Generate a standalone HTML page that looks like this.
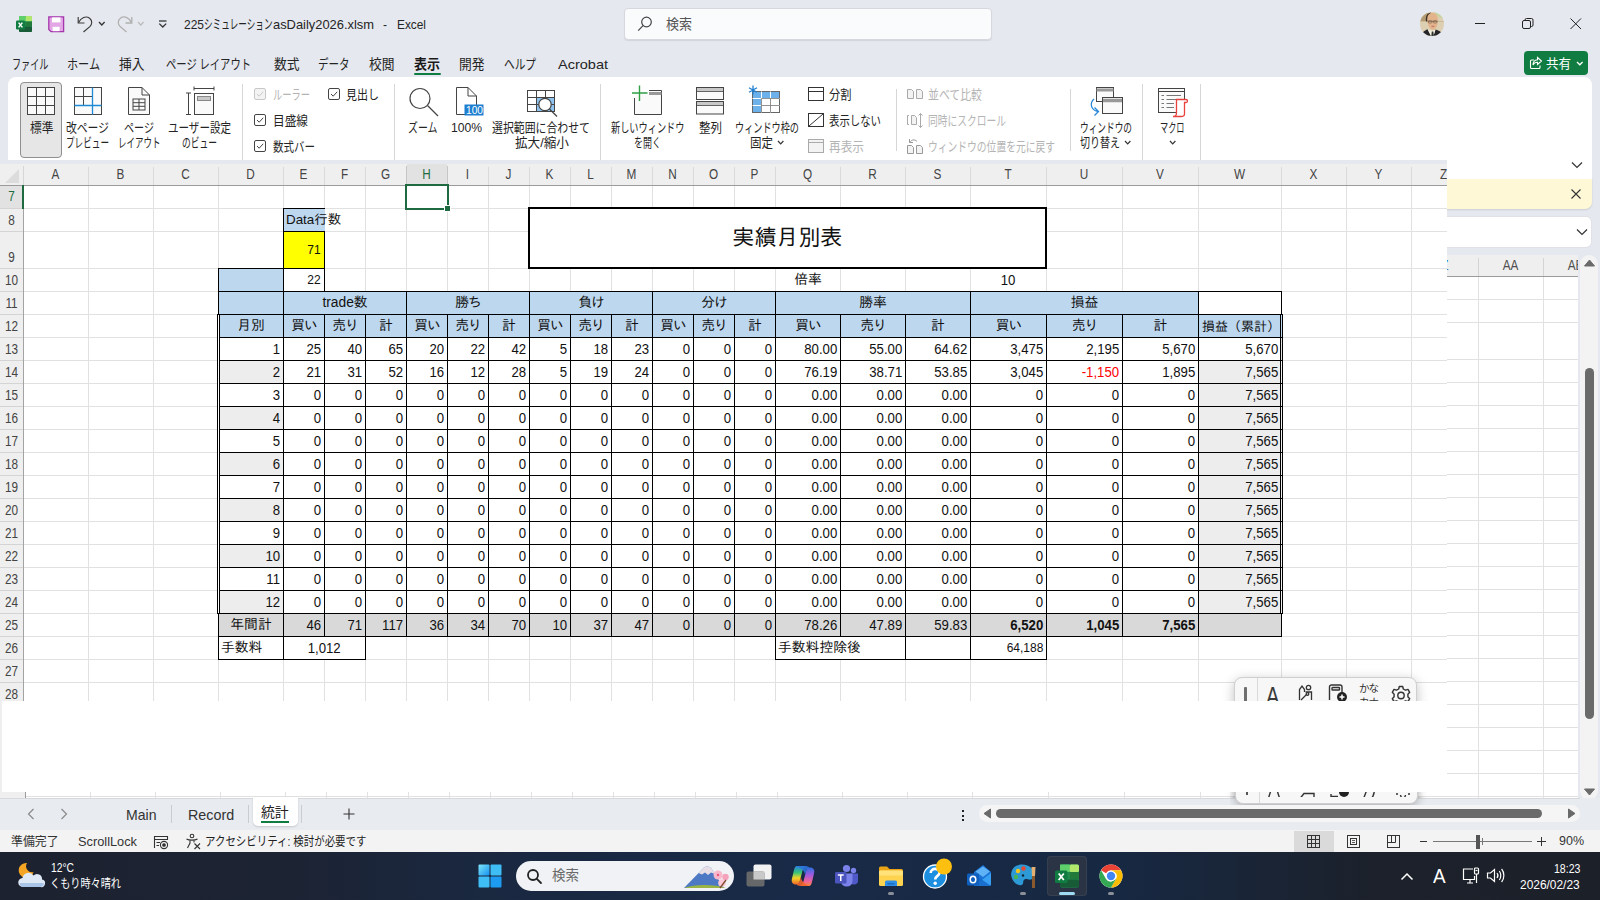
<!DOCTYPE html><html lang="ja"><head><meta charset="utf-8"><title>225シミュレーションasDaily2026.xlsm - Excel</title><style>
*{box-sizing:border-box;margin:0;padding:0}
html,body{width:1600px;height:900px;overflow:hidden}
body{background:#e5e8ee;font-family:"Liberation Sans","Noto Sans CJK JP",sans-serif;color:#222;position:relative;font-size:13px}
.a{position:absolute}
.t{position:absolute;white-space:nowrap;line-height:1}
.ui{font-family:"Liberation Sans","Noto Sans CJK JP",sans-serif}
.cell{position:absolute;white-space:nowrap;font-family:"Liberation Sans","IPAGothic",sans-serif;font-size:13.8px;color:#111;line-height:1;display:flex;align-items:center}
.nr,.nc,.nl{display:inline-block;letter-spacing:0;font-size:14.5px;transform:scaleX(.91)}
.nr{transform-origin:100% 50%}.nl{transform-origin:0 50%}
.r{justify-content:flex-end;padding-right:3px}
.c{justify-content:center}
.l{justify-content:flex-start;padding-left:2px}
.gl{position:absolute;background:#e1e1e1}
.bl{position:absolute;background:#000}
.ch{position:absolute;top:164px;height:20px;text-align:center;font-size:14px;line-height:20px;color:#505050;transform:scaleX(.84)}
.rh{position:absolute;left:0;width:23px;text-align:center;font-size:14px;color:#444;line-height:1;transform:scaleX(.84)}
</style></head><body>
<div class="a" style="left:1440px;top:150px;width:152px;height:29px;background:#fff"></div>
<div class="a" style="left:1440px;top:178px;width:152px;height:31px;background:#fff8d6;border-radius:0 0 7px 0;box-shadow:0 1px 2px rgba(0,0,0,.12)"></div>
<svg class="a" style="left:1570px;top:188px" width="12" height="12" stroke="#333" stroke-width="1.1"><path d="M1.5 1.5 L10.5 10.5 M10.5 1.5 L1.5 10.5"/></svg>
<div class="a" style="left:1440px;top:217px;width:151px;height:30px;background:#fff;border-radius:0 5px 5px 0;box-shadow:0 0 0 1px #e0e2e6"></div>
<svg class="a" style="left:1575px;top:227px" width="14" height="10" fill="none" stroke="#333" stroke-width="1.2"><path d="M2 2.5 L7 7.5 L12 2.5"/></svg>
<div class="a" style="left:0;top:255px;width:1578px;height:543px;background:#fff"></div>
<div class="a" style="left:1440px;top:255px;width:138px;height:21px;background:#efefef"></div>
<div class="a" style="left:1440px;top:276px;width:138px;height:1px;background:#9b9b9b"></div>
<div class="a" style="left:1478px;top:258px;width:1px;height:18px;background:#d4d4d4"></div>
<div class="a" style="left:1543px;top:258px;width:1px;height:18px;background:#d4d4d4"></div>
<div class="a" style="left:1440px;top:255px;width:138px;height:21px;overflow:hidden"><span class="t" style="left:38px;width:65px;text-align:center;top:3px;font-size:14px;color:#505050;transform:scaleX(.84)">AA</span><span class="t" style="left:103px;width:65px;text-align:center;top:3px;font-size:14px;color:#505050;transform:scaleX(.84)">AB</span><span class="t" style="left:0px;top:3px;font-size:14px;color:#2b7cd3">Z</span></div>
<div class="gl" style="left:0;top:299px;width:1578px;height:1px"></div>
<div class="gl" style="left:0;top:322px;width:1578px;height:1px"></div>
<div class="gl" style="left:0;top:359px;width:1578px;height:1px"></div>
<div class="gl" style="left:0;top:382px;width:1578px;height:1px"></div>
<div class="gl" style="left:0;top:405px;width:1578px;height:1px"></div>
<div class="gl" style="left:0;top:428px;width:1578px;height:1px"></div>
<div class="gl" style="left:0;top:451px;width:1578px;height:1px"></div>
<div class="gl" style="left:0;top:474px;width:1578px;height:1px"></div>
<div class="gl" style="left:0;top:497px;width:1578px;height:1px"></div>
<div class="gl" style="left:0;top:520px;width:1578px;height:1px"></div>
<div class="gl" style="left:0;top:543px;width:1578px;height:1px"></div>
<div class="gl" style="left:0;top:566px;width:1578px;height:1px"></div>
<div class="gl" style="left:0;top:589px;width:1578px;height:1px"></div>
<div class="gl" style="left:0;top:612px;width:1578px;height:1px"></div>
<div class="gl" style="left:0;top:635px;width:1578px;height:1px"></div>
<div class="gl" style="left:0;top:658px;width:1578px;height:1px"></div>
<div class="gl" style="left:0;top:681px;width:1578px;height:1px"></div>
<div class="gl" style="left:0;top:704px;width:1578px;height:1px"></div>
<div class="gl" style="left:0;top:727px;width:1578px;height:1px"></div>
<div class="gl" style="left:0;top:750px;width:1578px;height:1px"></div>
<div class="gl" style="left:0;top:773px;width:1578px;height:1px"></div>
<div class="gl" style="left:0;top:796px;width:1578px;height:1px"></div>
<div class="gl" style="left:90px;top:277px;width:1px;height:521px"></div>
<div class="gl" style="left:155px;top:277px;width:1px;height:521px"></div>
<div class="gl" style="left:220px;top:277px;width:1px;height:521px"></div>
<div class="gl" style="left:285px;top:277px;width:1px;height:521px"></div>
<div class="gl" style="left:326px;top:277px;width:1px;height:521px"></div>
<div class="gl" style="left:367px;top:277px;width:1px;height:521px"></div>
<div class="gl" style="left:408px;top:277px;width:1px;height:521px"></div>
<div class="gl" style="left:449px;top:277px;width:1px;height:521px"></div>
<div class="gl" style="left:490px;top:277px;width:1px;height:521px"></div>
<div class="gl" style="left:531px;top:277px;width:1px;height:521px"></div>
<div class="gl" style="left:572px;top:277px;width:1px;height:521px"></div>
<div class="gl" style="left:613px;top:277px;width:1px;height:521px"></div>
<div class="gl" style="left:654px;top:277px;width:1px;height:521px"></div>
<div class="gl" style="left:695px;top:277px;width:1px;height:521px"></div>
<div class="gl" style="left:736px;top:277px;width:1px;height:521px"></div>
<div class="gl" style="left:777px;top:277px;width:1px;height:521px"></div>
<div class="gl" style="left:842px;top:277px;width:1px;height:521px"></div>
<div class="gl" style="left:907px;top:277px;width:1px;height:521px"></div>
<div class="gl" style="left:972px;top:277px;width:1px;height:521px"></div>
<div class="gl" style="left:1048px;top:277px;width:1px;height:521px"></div>
<div class="gl" style="left:1124px;top:277px;width:1px;height:521px"></div>
<div class="gl" style="left:1200px;top:277px;width:1px;height:521px"></div>
<div class="gl" style="left:1283px;top:277px;width:1px;height:521px"></div>
<div class="gl" style="left:1348px;top:277px;width:1px;height:521px"></div>
<div class="gl" style="left:1413px;top:277px;width:1px;height:521px"></div>
<div class="gl" style="left:1478px;top:277px;width:1px;height:521px"></div>
<div class="gl" style="left:1543px;top:277px;width:1px;height:521px"></div>
<div class="a" style="left:0;top:277px;width:25px;height:521px;background:#efefef"></div>
<div class="gl" style="left:25px;top:277px;width:1px;height:521px;background:#9b9b9b"></div>
<div class="a" style="left:1580px;top:255px;width:18px;height:545px;background:#f3f3f3;border-radius:9px"></div>
<svg class="a" style="left:1584px;top:259px" width="11" height="8"><path d="M5.5 1 L10.5 7 H0.5 Z" fill="#6a6a6a" stroke="#6a6a6a" stroke-width="1" stroke-linejoin="round"/></svg>
<svg class="a" style="left:1584px;top:788px" width="11" height="8"><path d="M5.5 7 L10.5 1 H0.5 Z" fill="#6a6a6a" stroke="#6a6a6a" stroke-width="1" stroke-linejoin="round"/></svg>
<div class="a" style="left:1585px;top:368px;width:9px;height:351px;background:#6a6a6a;border-radius:5px"></div>
<div class="a" style="left:1235px;top:712px;width:181px;height:92px;background:#f6f6f6;border:1px solid #cfcfcf;border-radius:8px;box-shadow:0 3px 10px rgba(0,0,0,.22)"></div>
<div class="a" style="left:1258px;top:713px;width:1px;height:90px;background:#d9d9d9"></div>
<svg class="a" style="left:15px;top:15px" width="18" height="18" viewBox="0 0 18 18">
<rect x="4" y="1" width="13" height="16" rx="1.5" fill="#21a366"/>
<rect x="4" y="1" width="6.5" height="5.5" fill="#5fcf6c"/><rect x="10.5" y="1" width="6.5" height="5.5" rx="1" fill="#b1e86c"/>
<rect x="4" y="6.5" width="6.5" height="5" fill="#1f8c4e"/><rect x="10.5" y="6.5" width="6.5" height="5" fill="#21793a"/>
<rect x="4" y="11.5" width="13" height="5.5" rx="1" fill="#185c37"/>
<rect x="1" y="5.5" width="9" height="9" rx="1.2" fill="#107c41"/>
<path d="M3.6 7.6 L7.4 12.4 M7.4 7.6 L3.6 12.4" stroke="#fff" stroke-width="1.5"/></svg>
<svg class="a" style="left:48px;top:16px" width="17" height="17" viewBox="0 0 17 17">
<path d="M0.8 0.8 H15.6 V15.6 H3 L0.8 13.4 Z" fill="#e3a7e6" stroke="#a436ad" stroke-width="1.3"/>
<rect x="4" y="1.4" width="8.5" height="5" fill="#fff"/><rect x="4.6" y="10.8" width="7" height="4.4" fill="#fff"/></svg>
<svg class="a" style="left:76px;top:14px" width="20" height="20" viewBox="0 0 20 20" fill="none" stroke="#3a3a3a" stroke-width="1.15">
<path d="M2.2 3 V9 H8.5"/><path d="M2.6 8.6 C5 3.5 10 1.5 13.6 4.2 C16.6 6.6 16.2 10.2 13.8 12.6 L7.5 18"/></svg>
<svg class="a" style="left:97px;top:20px" width="10" height="8" fill="none" stroke="#333" stroke-width="1.3"><path d="M2 2 L4.8 5 L7.6 2"/></svg>
<svg class="a" style="left:114px;top:14px" width="20" height="20" viewBox="0 0 20 20" fill="none" stroke="#b0b0b0" stroke-width="1.3">
<path d="M17.8 3 V9 H11.5"/><path d="M17.4 8.6 C15 3.5 10 1.5 6.4 4.2 C3.4 6.6 3.8 10.2 6.2 12.6 L12.5 18"/></svg>
<svg class="a" style="left:136px;top:20px" width="10" height="8" fill="none" stroke="#bbb" stroke-width="1.2"><path d="M2 2 L4.8 5 L7.6 2"/></svg>
<svg class="a" style="left:157px;top:18px" width="12" height="12" fill="none" stroke="#333" stroke-width="1.3"><path d="M2 3 H9.5"/><path d="M2.3 5.6 L5.75 9 L9.2 5.6"/></svg>
<span id="t0" class="t" style="left:183.5px;top:18.2px;font-size:13.5px;color:#242424;font-weight:normal;transform-origin:0 50%;transform:scaleX(0.8877);">225</span>
<span id="t1" class="t" style="left:204.0px;top:18.2px;font-size:13.5px;color:#242424;font-weight:normal;transform-origin:0 50%;transform:scaleX(0.6374);">シミュレーション</span>
<span id="t2" class="t" style="left:273.0px;top:18.2px;font-size:13.5px;color:#242424;font-weight:normal;transform-origin:0 50%;transform:scaleX(0.9547);">asDaily2026.xlsm</span>
<span id="t3" class="t" style="left:383.0px;top:18.2px;font-size:13.5px;color:#242424;font-weight:normal;transform-origin:0 50%;transform:scaleX(0.8889);">-</span>
<span id="t4" class="t" style="left:397.0px;top:18.2px;font-size:13.5px;color:#242424;font-weight:normal;transform-origin:0 50%;transform:scaleX(0.8784);">Excel</span>
<div class="a" style="left:624px;top:8px;width:368px;height:32px;background:#fafbfc;border:1px solid #d5d8dd;border-radius:4px;box-shadow:0 1px 1px rgba(0,0,0,.08)"></div>
<svg class="a" style="left:636px;top:15px" width="18" height="18" fill="none" stroke="#444" stroke-width="1.2"><circle cx="10.5" cy="7" r="4.8"/><path d="M7 10.6 L2.2 15.6"/></svg>
<span id="t5" class="t" style="left:666.0px;top:17.8px;font-size:13.5px;color:#555;font-weight:normal;transform-origin:0 50%;transform:scaleX(0.9630);">検索</span>
<svg class="a" style="left:1420px;top:12px" width="24" height="24" viewBox="0 0 24 24"><defs><clipPath id="av"><circle cx="12" cy="12" r="12"/></clipPath></defs>
<g clip-path="url(#av)"><rect width="24" height="24" fill="#ddd0b2"/><path d="M0 0 H8 V9 H0 Z" fill="#b39a72"/><path d="M14 0 H24 V7 C20 5.500 17 4 14 0Z" fill="#c4d49a"/><rect x="0" y="9" width="24" height="1" fill="#cbbb98"/>
<path d="M6 9.500 C5.200 4 7.500 0.800 11 0.600 L10 3 C8 4.500 7.600 7 7.800 9.500 Z" fill="#3a3026"/>
<path d="M7.300 8 C7 2.500 10 1 12.300 1 C15.500 1 18.300 3 17.800 9 C17.600 13 16.500 17.500 13 17.800 C9.500 17.800 7.600 13 7.300 8 Z" fill="#e3b48c"/>
<path d="M8 9.300 H17.500" stroke="#6d5a48" stroke-width="0.700"/><rect x="8.300" y="8.700" width="3.600" height="2.300" rx="0.800" fill="none" stroke="#6d5a48" stroke-width="0.600"/><rect x="13.300" y="8.700" width="3.600" height="2.300" rx="0.800" fill="none" stroke="#6d5a48" stroke-width="0.600"/>
<path d="M11.500 14.300 H14.300" stroke="#b5676a" stroke-width="0.900"/>
<path d="M2.500 21 C4 18.500 6.500 18.300 7.500 17 L11 24 H2 Z" fill="#26262a"/><path d="M21.500 21 C20 18.500 17.500 18.500 15.500 17.500 L13.500 24 H22 Z" fill="#26262a"/>
<path d="M7.500 17 L11 24 H13.500 L15.500 17.500 C14 19 10 19 7.500 17 Z" fill="#f1efdf"/><path d="M11.800 19.600 L13.300 19.600 L13.900 24 H11.300 Z" fill="#2d3130"/></g></svg>
<div class="a" style="left:1475px;top:23px;width:10px;height:1px;background:#222"></div>
<svg class="a" style="left:1522px;top:18px" width="12" height="12" fill="none" stroke="#222" stroke-width="1"><rect x="0.5" y="2.5" width="8" height="8" rx="1.5"/><path d="M3 2.5 V2 A1.5 1.5 0 0 1 4.5 0.5 H9.5 A1.5 1.5 0 0 1 11 2 V7 A1.5 1.5 0 0 1 9.5 8.5 H9"/></svg>
<svg class="a" style="left:1570px;top:18px" width="12" height="12" stroke="#222" stroke-width="1"><path d="M0.5 0.5 L11 11 M11 0.5 L0.5 11"/></svg>
<span id="t6" class="t" style="left:12.0px;top:57.8px;font-size:13.5px;color:#242424;font-weight:normal;transform-origin:0 50%;transform:scaleX(0.6759);">ファイル</span>
<span id="t7" class="t" style="left:66.5px;top:57.8px;font-size:13.5px;color:#242424;font-weight:normal;transform-origin:0 50%;transform:scaleX(0.8228);">ホーム</span>
<span id="t8" class="t" style="left:119.0px;top:57.8px;font-size:13.5px;color:#242424;font-weight:normal;transform-origin:0 50%;transform:scaleX(0.9444);">挿入</span>
<span id="t9" class="t" style="left:166.0px;top:57.8px;font-size:13.5px;color:#242424;font-weight:normal;transform-origin:0 50%;transform:scaleX(0.7624);">ページ レイアウト</span>
<span id="t10" class="t" style="left:273.5px;top:57.8px;font-size:13.5px;color:#242424;font-weight:normal;transform-origin:0 50%;transform:scaleX(0.9444);">数式</span>
<span id="t11" class="t" style="left:317.5px;top:57.8px;font-size:13.5px;color:#242424;font-weight:normal;transform-origin:0 50%;transform:scaleX(0.7778);">データ</span>
<span id="t12" class="t" style="left:369.0px;top:57.8px;font-size:13.5px;color:#242424;font-weight:normal;transform-origin:0 50%;transform:scaleX(0.9444);">校閲</span>
<span id="t13" class="t" style="left:459.0px;top:57.8px;font-size:13.5px;color:#242424;font-weight:normal;transform-origin:0 50%;transform:scaleX(0.9444);">開発</span>
<span id="t14" class="t" style="left:504.0px;top:57.8px;font-size:13.5px;color:#242424;font-weight:normal;transform-origin:0 50%;transform:scaleX(0.7901);">ヘルプ</span>
<span id="t15" class="t" style="left:558.0px;top:57.8px;font-size:13.5px;color:#242424;font-weight:normal;transform-origin:0 50%;transform:scaleX(1.0745);">Acrobat</span>
<span id="t16" class="t" style="left:414.0px;top:57.8px;font-size:13.5px;color:#1a1a1a;font-weight:bold;transform-origin:0 50%;transform:scaleX(0.9630);">表示</span>
<div class="a" style="left:414px;top:73px;width:27px;height:2px;background:#107c41;border-radius:1px"></div>
<div class="a" style="left:1524px;top:51px;width:64px;height:24px;background:#107c41;border-radius:4px"></div>
<svg class="a" style="left:1529px;top:56px" width="14" height="14" fill="none" stroke="#fff" stroke-width="1.1"><path d="M5 4 H2.5 A1 1 0 0 0 1.5 5 V11.5 A1 1 0 0 0 2.5 12.5 H10 A1 1 0 0 0 11 11.5 V9.5"/><path d="M8.5 1.5 L12.5 5 L8.5 8.5 V6.3 C6 6.3 4.8 7.3 4 9 C4 6 5.5 3.9 8.5 3.7 Z"/></svg>
<span id="t17" class="t" style="left:1546.0px;top:57.0px;font-size:13px;color:#fff;font-weight:normal;transform-origin:0 50%;transform:scaleX(0.9610);">共有</span>
<svg class="a" style="left:1575px;top:60px" width="10" height="8" fill="none" stroke="#fff" stroke-width="1.3"><path d="M2 2 L4.8 4.8 L7.6 2"/></svg>
<div class="a" style="left:7.5px;top:77px;width:1584.5px;height:102px;background:#fff;border-radius:8px 8px 0 8px"></div>
<div class="a" style="left:242px;top:84px;width:1px;height:76px;background:#d6d6d6"></div>
<div class="a" style="left:394px;top:84px;width:1px;height:76px;background:#d6d6d6"></div>
<div class="a" style="left:600px;top:84px;width:1px;height:76px;background:#d6d6d6"></div>
<div class="a" style="left:1142px;top:84px;width:1px;height:76px;background:#d6d6d6"></div>
<div class="a" style="left:1200px;top:84px;width:1px;height:76px;background:#d6d6d6"></div>
<div class="a" style="left:896px;top:89px;width:1px;height:62px;background:#d6d6d6"></div>
<div class="a" style="left:1070px;top:89px;width:1px;height:62px;background:#d6d6d6"></div>
<div class="a" style="left:20px;top:82px;width:42px;height:76px;background:#e6e6e6;border:1px solid #8f8f8f;border-radius:4px"></div>
<svg class="a" style="left:26px;top:86px" width="30" height="30" fill="#fafafa" stroke="#444" stroke-width="1"><rect x="1.5" y="1.5" width="27" height="27"/><path d="M10.5 1.5 V28.5 M19.5 1.5 V28.5 M1.5 10.5 H28.5 M1.5 19.5 H28.5"/></svg>
<svg class="a" style="left:73px;top:86px" width="30" height="30" fill="#fafafa" stroke="#444" stroke-width="1"><rect x="1.5" y="1.5" width="27" height="27"/><path d="M10.5 1.5 V19 M1.5 10.5 H19.5" /><path d="M19.5 1.5 V28.5 M1.5 19.5 H28.5" stroke="#1e8ad6" stroke-width="1.3"/></svg>
<svg class="a" style="left:127px;top:86px" width="24" height="30" fill="#fafafa" stroke="#444" stroke-width="1"><path d="M1.5 1.5 H15 L22.5 9 V28.5 H1.5 Z"/><path d="M15 1.5 V9 H22.5" fill="none"/><rect x="6" y="13" width="12" height="11" fill="none"/><path d="M6 16.7 H18 M6 20.3 H18 M12 13 V24"/></svg>
<svg class="a" style="left:185px;top:86px" width="32" height="30" fill="none" stroke="#444" stroke-width="1"><path d="M9 2.5 H29 M9 0.5 V4.5 M29 0.5 V4.5"/><path d="M3.5 7 V28.5 M1 7 H6 M1 28.5 H6"/><rect x="9.5" y="7.5" width="19" height="21" fill="#fafafa"/><rect x="12.5" y="10.5" width="13" height="4" fill="#c8c8c8" stroke="#888"/></svg>
<span id="t18" class="t" style="left:29.5px;top:121.0px;font-size:13px;color:#242424;font-weight:normal;transform-origin:0 50%;transform:scaleX(0.9033);">標準</span>
<span id="t19" class="t" style="left:66.0px;top:121.0px;font-size:13px;color:#242424;font-weight:normal;transform-origin:0 50%;transform:scaleX(0.8309);">改ページ</span>
<span id="t20" class="t" style="left:66.0px;top:136.0px;font-size:13px;color:#242424;font-weight:normal;transform-origin:0 50%;transform:scaleX(0.6614);">プレビュー</span>
<span id="t21" class="t" style="left:124.0px;top:121.0px;font-size:13px;color:#242424;font-weight:normal;transform-origin:0 50%;transform:scaleX(0.7742);">ページ</span>
<span id="t22" class="t" style="left:117.5px;top:136.0px;font-size:13px;color:#242424;font-weight:normal;transform-origin:0 50%;transform:scaleX(0.6537);">レイアウト</span>
<span id="t23" class="t" style="left:168.0px;top:121.0px;font-size:13px;color:#242424;font-weight:normal;transform-origin:0 50%;transform:scaleX(0.8103);">ユーザー設定</span>
<span id="t24" class="t" style="left:182.0px;top:136.0px;font-size:13px;color:#242424;font-weight:normal;transform-origin:0 50%;transform:scaleX(0.6729);">のビュー</span>
<svg class="a" style="left:254px;top:88px" width="12" height="12" fill="#f3f3f3" stroke="#c8c8c8" stroke-width="1"><rect x="0.5" y="0.5" width="11" height="11" rx="1.5"/><path d="M3 6 L5.2 8.2 L9.2 3.8" fill="none"/></svg>
<span id="t25" class="t" style="left:272.5px;top:88.0px;font-size:13px;color:#b4b4b4;font-weight:normal;transform-origin:0 50%;transform:scaleX(0.7113);">ルーラー</span>
<svg class="a" style="left:328px;top:88px" width="12" height="12" fill="#fff" stroke="#444" stroke-width="1"><rect x="0.5" y="0.5" width="11" height="11" rx="1.5"/><path d="M3 6 L5.2 8.2 L9.2 3.8" fill="none"/></svg>
<span id="t26" class="t" style="left:346.0px;top:88.0px;font-size:13px;color:#242424;font-weight:normal;transform-origin:0 50%;transform:scaleX(0.8458);">見出し</span>
<svg class="a" style="left:254px;top:114px" width="12" height="12" fill="#fff" stroke="#444" stroke-width="1"><rect x="0.5" y="0.5" width="11" height="11" rx="1.5"/><path d="M3 6 L5.2 8.2 L9.2 3.8" fill="none"/></svg>
<span id="t27" class="t" style="left:272.5px;top:114.0px;font-size:13px;color:#242424;font-weight:normal;transform-origin:0 50%;transform:scaleX(0.8971);">目盛線</span>
<svg class="a" style="left:254px;top:140px" width="12" height="12" fill="#fff" stroke="#444" stroke-width="1"><rect x="0.5" y="0.5" width="11" height="11" rx="1.5"/><path d="M3 6 L5.2 8.2 L9.2 3.8" fill="none"/></svg>
<span id="t28" class="t" style="left:272.5px;top:140.0px;font-size:13px;color:#242424;font-weight:normal;transform-origin:0 50%;transform:scaleX(0.8074);">数式バー</span>
<svg class="a" style="left:406px;top:84px" width="36" height="36" fill="none" stroke="#444" stroke-width="1.2"><circle cx="14" cy="14.5" r="10"/><path d="M21.5 21.5 L32 32"/></svg>
<span id="t29" class="t" style="left:408.0px;top:121.0px;font-size:13px;color:#242424;font-weight:normal;transform-origin:0 50%;transform:scaleX(0.7638);">ズーム</span>
<svg class="a" style="left:455px;top:86px" width="30" height="32" fill="#fff" stroke="#444" stroke-width="1"><path d="M1.5 1.5 H13 L21.5 10 V28.5 H1.5 Z"/><path d="M13 1.5 V10 H21.5" fill="none"/><rect x="9.5" y="18.5" width="19" height="11" fill="#1e7fd0" stroke="none"/></svg>
<span id="t30" class="t" style="left:465.5px;top:105.0px;font-size:10.5px;color:#fff;font-weight:normal;transform-origin:0 50%;transform:scaleX(0.9697);">100</span>
<span id="t31" class="t" style="left:451.0px;top:121.0px;font-size:13px;color:#242424;font-weight:normal;transform-origin:0 50%;transform:scaleX(0.9323);">100%</span>
<svg class="a" style="left:526px;top:89px" width="34" height="30" fill="none" stroke="#444" stroke-width="1"><rect x="10.5" y="8.5" width="18" height="14" fill="#8fc4f0" stroke="none"/><rect x="1.5" y="1.5" width="27" height="21" /><path d="M1.5 8.5 H28.5 M1.5 15.5 H28.5 M10.5 1.5 V22.5 M19.5 1.5 V22.5"/><circle cx="19" cy="15.5" r="6.2" fill="#fff" stroke-width="1.2"/><path d="M23.5 20 L31 27.5" stroke-width="1.3"/></svg>
<span id="t32" class="t" style="left:492.0px;top:121.0px;font-size:13px;color:#242424;font-weight:normal;transform-origin:0 50%;transform:scaleX(0.8375);">選択範囲に合わせて</span>
<span id="t33" class="t" style="left:515.0px;top:136.0px;font-size:13px;color:#242424;font-weight:normal;transform-origin:0 50%;transform:scaleX(0.9708);">拡大/縮小</span>
<svg class="a" style="left:630px;top:84px" width="34" height="34" fill="none" stroke="#444" stroke-width="1"><path d="M4.5 14 V30.5 H31.5 V6.5 H19" fill="#fafafa"/><path d="M19 9.5 H31.5" stroke="#999" stroke-width="3"/><path d="M9.5 1.5 V17 M2 9 H17.5" stroke="#2ea043" stroke-width="1.4"/></svg>
<span id="t34" class="t" style="left:610.5px;top:121.0px;font-size:13px;color:#242424;font-weight:normal;transform-origin:0 50%;transform:scaleX(0.7066);">新しいウィンドウ</span>
<span id="t35" class="t" style="left:634.0px;top:136.0px;font-size:13px;color:#242424;font-weight:normal;transform-origin:0 50%;transform:scaleX(0.6920);">を開く</span>
<svg class="a" style="left:695px;top:86px" width="30" height="30" fill="#fafafa" stroke="#444" stroke-width="1"><rect x="1.5" y="1.5" width="27" height="12"/><rect x="1.5" y="15.5" width="27" height="12.5"/><rect x="2" y="2" width="26" height="3.5" fill="#c8c8c8" stroke="none"/><rect x="2" y="16" width="26" height="3.5" fill="#c8c8c8" stroke="none"/><path d="M1.5 5.5 H28.5 M1.5 19.5 H28.5" stroke-width="0.8"/></svg>
<span id="t36" class="t" style="left:699.0px;top:121.0px;font-size:13px;color:#242424;font-weight:normal;transform-origin:0 50%;transform:scaleX(0.8841);">整列</span>
<svg class="a" style="left:748px;top:84px" width="36" height="34" fill="none" stroke="#1e7fd0" stroke-width="1"><rect x="4.5" y="7.5" width="27" height="21" fill="#fff" stroke="#666"/><rect x="5" y="8" width="26" height="7" fill="#6cb1ea" stroke="none"/><rect x="5" y="8" width="9" height="20" fill="#6cb1ea" stroke="none"/><path d="M4.5 14.5 H31.5 M4.5 21.5 H31.5 M13.5 7.5 V28.5 M22.5 7.5 V28.5" stroke="#fff"/><path d="M13.5 14.5 H31.5 M13.5 21.5 H31.5 M22.5 14.5 V28.5 M13.5 14.5 V28.5" stroke="#777" stroke-width="0.8"/><path d="M5 1.5 V10.5 M1 3.7 L9 8.3 M9 3.7 L1 8.3" stroke-width="1.3"/></svg>
<span id="t37" class="t" style="left:735.0px;top:121.0px;font-size:13px;color:#242424;font-weight:normal;transform-origin:0 50%;transform:scaleX(0.7032);">ウィンドウ枠の</span>
<span id="t38" class="t" style="left:749.5px;top:136.0px;font-size:13px;color:#242424;font-weight:normal;transform-origin:0 50%;transform:scaleX(0.8841);">固定</span>
<svg class="a" style="left:776px;top:139px" width="10" height="8" fill="none" stroke="#333" stroke-width="1.2"><path d="M2 2 L4.7 4.8 L7.4 2"/></svg>
<svg class="a" style="left:808px;top:86px" width="16" height="16" fill="#fff" stroke="#333" stroke-width="1"><rect x="0.5" y="1.5" width="15" height="13"/><path d="M0.5 5.5 H15.5"/></svg>
<span id="t39" class="t" style="left:829.0px;top:88.0px;font-size:13px;color:#242424;font-weight:normal;transform-origin:0 50%;transform:scaleX(0.8649);">分割</span>
<svg class="a" style="left:808px;top:112px" width="16" height="16" fill="#fff" stroke="#333" stroke-width="1"><rect x="0.5" y="1.5" width="15" height="13"/><path d="M1 14 L15 2"/></svg>
<span id="t40" class="t" style="left:829.0px;top:114.0px;font-size:13px;color:#242424;font-weight:normal;transform-origin:0 50%;transform:scaleX(0.7998);">表示しない</span>
<svg class="a" style="left:808px;top:138px" width="16" height="16" fill="#f3f3f3" stroke="#aaa" stroke-width="1"><rect x="0.5" y="1.5" width="15" height="13"/><path d="M0.5 4.5 H15.5"/></svg>
<span id="t41" class="t" style="left:829.0px;top:140.0px;font-size:13px;color:#b4b4b4;font-weight:normal;transform-origin:0 50%;transform:scaleX(0.8971);">再表示</span>
<svg class="a" style="left:906px;top:87px" width="18" height="14" fill="#f3f3f3" stroke="#aaa" stroke-width="1"><path d="M1.5 2.5 H5.5 L7.5 4.5 V11.5 H1.5 Z M10.5 2.5 H14.5 L16.5 4.5 V11.5 H10.5 Z"/></svg>
<span id="t42" class="t" style="left:928.0px;top:88.0px;font-size:13px;color:#b4b4b4;font-weight:normal;transform-origin:0 50%;transform:scaleX(0.8374);">並べて比較</span>
<svg class="a" style="left:906px;top:112px" width="18" height="17" fill="none" stroke="#aaa" stroke-width="1"><path d="M3 3.5 H1.5 V12.5 H3"/><path d="M5.5 3.5 H8.5 L10.5 5.5 V12.5 H5.5 Z" fill="#f3f3f3"/><path d="M14.5 1.5 V15.5 M12.5 3.5 L14.5 1.5 L16.5 3.5 M12.5 13.5 L14.5 15.5 L16.5 13.5"/></svg>
<span id="t43" class="t" style="left:928.0px;top:114.0px;font-size:13px;color:#b4b4b4;font-weight:normal;transform-origin:0 50%;transform:scaleX(0.7499);">同時にスクロール</span>
<svg class="a" style="left:906px;top:137px" width="18" height="18" fill="#f3f3f3" stroke="#999" stroke-width="1"><path d="M1.5 8.5 H5.5 L7.5 10.5 V16.5 H1.5 Z M10.5 8.5 H14.5 L16.5 10.5 V16.5 H10.5 Z"/><path d="M4 5.5 C5 2.5 9 2 11 4.5 M3.5 2 V5.5 H7" fill="none"/></svg>
<span id="t44" class="t" style="left:928.0px;top:140.0px;font-size:13px;color:#b4b4b4;font-weight:normal;transform-origin:0 50%;transform:scaleX(0.7514);">ウィンドウの位置を元に戻す</span>
<svg class="a" style="left:1088px;top:84px" width="36" height="36" fill="#fafafa" stroke="#444" stroke-width="1"><rect x="8.5" y="3.5" width="17" height="14"/><path d="M8.5 6 H25.5" stroke="#999" stroke-width="3"/><rect x="14.5" y="13.5" width="20" height="16" /><path d="M14.5 16.5 H34.5" stroke="#999" stroke-width="3.5"/><rect x="14.5" y="13.5" width="20" height="16" fill="none"/><path d="M6 15 C1.5 19 2.5 26 10 27.5 M6.5 23.5 L10.5 27.5 L6.5 31.5" fill="none" stroke="#2b88d8" stroke-width="1.3"/></svg>
<span id="t45" class="t" style="left:1080.0px;top:121.0px;font-size:13px;color:#242424;font-weight:normal;transform-origin:0 50%;transform:scaleX(0.6665);">ウィンドウの</span>
<span id="t46" class="t" style="left:1080.0px;top:136.0px;font-size:13px;color:#242424;font-weight:normal;transform-origin:0 50%;transform:scaleX(0.7690);">切り替え</span>
<svg class="a" style="left:1123px;top:139px" width="10" height="8" fill="none" stroke="#333" stroke-width="1.2"><path d="M2 2 L4.7 4.8 L7.4 2"/></svg>
<svg class="a" style="left:1156px;top:85px" width="34" height="34" fill="#fafafa" stroke="#444" stroke-width="1"><rect x="2.5" y="3.5" width="26" height="24"/><path d="M2.5 6.5 H28.5" stroke-width="1"/><path d="M5.5 10.5 H8 M10.5 10.5 H25 M5.5 14.5 H8 M10.5 14.5 H20 M5.5 18.5 H8 M10.5 18.5 H18 M5.5 22.5 H8 M10.5 22.5 H18" stroke="#777"/><path d="M20.5 14.5 H30 C32 14.5 32 17.5 30 17.5 H28.5 V29 C28.5 31 26.5 31.5 25 31.5 H17 C19.5 31.5 20.5 30 20.5 28 Z" fill="#fff" stroke="#e8423f" stroke-width="1.3"/></svg>
<span id="t47" class="t" style="left:1159.5px;top:121.0px;font-size:13px;color:#242424;font-weight:normal;transform-origin:0 50%;transform:scaleX(0.6280);">マクロ</span>
<svg class="a" style="left:1168px;top:139px" width="10" height="8" fill="none" stroke="#333" stroke-width="1.2"><path d="M2 2 L4.7 4.8 L7.4 2"/></svg>
<div class="a" id="sheet" style="left:0;top:160px;width:1447px;height:540.5px;background:#fff;overflow:hidden">
<div class="a" style="left:0;top:-160px;width:1600px;height:900px">
<div class="a" style="left:0;top:160px;width:1447px;height:4px;background:#e5e8ee"></div>
<div class="a" style="left:0;top:164px;width:1447px;height:21px;background:#efefef"></div>
<div class="a" style="left:0;top:185px;width:23px;height:520px;background:#efefef"></div>
<div class="gl" style="left:88px;top:186px;width:1px;height:520px"></div>
<div class="a" style="left:88px;top:167px;width:1px;height:18px;background:#dadada"></div>
<div class="gl" style="left:153px;top:186px;width:1px;height:520px"></div>
<div class="a" style="left:153px;top:167px;width:1px;height:18px;background:#dadada"></div>
<div class="gl" style="left:218px;top:186px;width:1px;height:520px"></div>
<div class="a" style="left:218px;top:167px;width:1px;height:18px;background:#dadada"></div>
<div class="gl" style="left:283px;top:186px;width:1px;height:520px"></div>
<div class="a" style="left:283px;top:167px;width:1px;height:18px;background:#dadada"></div>
<div class="gl" style="left:324px;top:186px;width:1px;height:520px"></div>
<div class="a" style="left:324px;top:167px;width:1px;height:18px;background:#dadada"></div>
<div class="gl" style="left:365px;top:186px;width:1px;height:520px"></div>
<div class="a" style="left:365px;top:167px;width:1px;height:18px;background:#dadada"></div>
<div class="gl" style="left:406px;top:186px;width:1px;height:520px"></div>
<div class="a" style="left:406px;top:167px;width:1px;height:18px;background:#dadada"></div>
<div class="gl" style="left:447px;top:186px;width:1px;height:520px"></div>
<div class="a" style="left:447px;top:167px;width:1px;height:18px;background:#dadada"></div>
<div class="gl" style="left:488px;top:186px;width:1px;height:520px"></div>
<div class="a" style="left:488px;top:167px;width:1px;height:18px;background:#dadada"></div>
<div class="gl" style="left:529px;top:186px;width:1px;height:520px"></div>
<div class="a" style="left:529px;top:167px;width:1px;height:18px;background:#dadada"></div>
<div class="gl" style="left:570px;top:186px;width:1px;height:520px"></div>
<div class="a" style="left:570px;top:167px;width:1px;height:18px;background:#dadada"></div>
<div class="gl" style="left:611px;top:186px;width:1px;height:520px"></div>
<div class="a" style="left:611px;top:167px;width:1px;height:18px;background:#dadada"></div>
<div class="gl" style="left:652px;top:186px;width:1px;height:520px"></div>
<div class="a" style="left:652px;top:167px;width:1px;height:18px;background:#dadada"></div>
<div class="gl" style="left:693px;top:186px;width:1px;height:520px"></div>
<div class="a" style="left:693px;top:167px;width:1px;height:18px;background:#dadada"></div>
<div class="gl" style="left:734px;top:186px;width:1px;height:520px"></div>
<div class="a" style="left:734px;top:167px;width:1px;height:18px;background:#dadada"></div>
<div class="gl" style="left:775px;top:186px;width:1px;height:520px"></div>
<div class="a" style="left:775px;top:167px;width:1px;height:18px;background:#dadada"></div>
<div class="gl" style="left:840px;top:186px;width:1px;height:520px"></div>
<div class="a" style="left:840px;top:167px;width:1px;height:18px;background:#dadada"></div>
<div class="gl" style="left:905px;top:186px;width:1px;height:520px"></div>
<div class="a" style="left:905px;top:167px;width:1px;height:18px;background:#dadada"></div>
<div class="gl" style="left:970px;top:186px;width:1px;height:520px"></div>
<div class="a" style="left:970px;top:167px;width:1px;height:18px;background:#dadada"></div>
<div class="gl" style="left:1046px;top:186px;width:1px;height:520px"></div>
<div class="a" style="left:1046px;top:167px;width:1px;height:18px;background:#dadada"></div>
<div class="gl" style="left:1122px;top:186px;width:1px;height:520px"></div>
<div class="a" style="left:1122px;top:167px;width:1px;height:18px;background:#dadada"></div>
<div class="gl" style="left:1198px;top:186px;width:1px;height:520px"></div>
<div class="a" style="left:1198px;top:167px;width:1px;height:18px;background:#dadada"></div>
<div class="gl" style="left:1281px;top:186px;width:1px;height:520px"></div>
<div class="a" style="left:1281px;top:167px;width:1px;height:18px;background:#dadada"></div>
<div class="gl" style="left:1346px;top:186px;width:1px;height:520px"></div>
<div class="a" style="left:1346px;top:167px;width:1px;height:18px;background:#dadada"></div>
<div class="gl" style="left:1411px;top:186px;width:1px;height:520px"></div>
<div class="a" style="left:1411px;top:167px;width:1px;height:18px;background:#dadada"></div>
<div class="gl" style="left:24px;top:208px;width:1447px;height:1px"></div>
<div class="a" style="left:0;top:208px;width:23px;height:1px;background:#d4d4d4"></div>
<div class="gl" style="left:24px;top:231px;width:1447px;height:1px"></div>
<div class="a" style="left:0;top:231px;width:23px;height:1px;background:#d4d4d4"></div>
<div class="gl" style="left:24px;top:268px;width:1447px;height:1px"></div>
<div class="a" style="left:0;top:268px;width:23px;height:1px;background:#d4d4d4"></div>
<div class="gl" style="left:24px;top:291px;width:1447px;height:1px"></div>
<div class="a" style="left:0;top:291px;width:23px;height:1px;background:#d4d4d4"></div>
<div class="gl" style="left:24px;top:314px;width:1447px;height:1px"></div>
<div class="a" style="left:0;top:314px;width:23px;height:1px;background:#d4d4d4"></div>
<div class="gl" style="left:24px;top:337px;width:1447px;height:1px"></div>
<div class="a" style="left:0;top:337px;width:23px;height:1px;background:#d4d4d4"></div>
<div class="gl" style="left:24px;top:360px;width:1447px;height:1px"></div>
<div class="a" style="left:0;top:360px;width:23px;height:1px;background:#d4d4d4"></div>
<div class="gl" style="left:24px;top:383px;width:1447px;height:1px"></div>
<div class="a" style="left:0;top:383px;width:23px;height:1px;background:#d4d4d4"></div>
<div class="gl" style="left:24px;top:406px;width:1447px;height:1px"></div>
<div class="a" style="left:0;top:406px;width:23px;height:1px;background:#d4d4d4"></div>
<div class="gl" style="left:24px;top:429px;width:1447px;height:1px"></div>
<div class="a" style="left:0;top:429px;width:23px;height:1px;background:#d4d4d4"></div>
<div class="gl" style="left:24px;top:452px;width:1447px;height:1px"></div>
<div class="a" style="left:0;top:452px;width:23px;height:1px;background:#d4d4d4"></div>
<div class="gl" style="left:24px;top:475px;width:1447px;height:1px"></div>
<div class="a" style="left:0;top:475px;width:23px;height:1px;background:#d4d4d4"></div>
<div class="gl" style="left:24px;top:498px;width:1447px;height:1px"></div>
<div class="a" style="left:0;top:498px;width:23px;height:1px;background:#d4d4d4"></div>
<div class="gl" style="left:24px;top:521px;width:1447px;height:1px"></div>
<div class="a" style="left:0;top:521px;width:23px;height:1px;background:#d4d4d4"></div>
<div class="gl" style="left:24px;top:544px;width:1447px;height:1px"></div>
<div class="a" style="left:0;top:544px;width:23px;height:1px;background:#d4d4d4"></div>
<div class="gl" style="left:24px;top:567px;width:1447px;height:1px"></div>
<div class="a" style="left:0;top:567px;width:23px;height:1px;background:#d4d4d4"></div>
<div class="gl" style="left:24px;top:590px;width:1447px;height:1px"></div>
<div class="a" style="left:0;top:590px;width:23px;height:1px;background:#d4d4d4"></div>
<div class="gl" style="left:24px;top:613px;width:1447px;height:1px"></div>
<div class="a" style="left:0;top:613px;width:23px;height:1px;background:#d4d4d4"></div>
<div class="gl" style="left:24px;top:636px;width:1447px;height:1px"></div>
<div class="a" style="left:0;top:636px;width:23px;height:1px;background:#d4d4d4"></div>
<div class="gl" style="left:24px;top:659px;width:1447px;height:1px"></div>
<div class="a" style="left:0;top:659px;width:23px;height:1px;background:#d4d4d4"></div>
<div class="gl" style="left:24px;top:682px;width:1447px;height:1px"></div>
<div class="a" style="left:0;top:682px;width:23px;height:1px;background:#d4d4d4"></div>
<div class="gl" style="left:24px;top:705px;width:1447px;height:1px"></div>
<div class="a" style="left:0;top:705px;width:23px;height:1px;background:#d4d4d4"></div>
<div class="a" style="left:0;top:185px;width:1447px;height:1px;background:#9b9b9b"></div>
<div class="a" style="left:23px;top:166px;width:1px;height:19px;background:#d6d6d6"></div><div class="a" style="left:23px;top:185px;width:1px;height:521px;background:#a3a3a3"></div>
<div class="a" style="left:407px;top:164px;width:40px;height:21px;background:#e2e2e2"></div>
<div class="a" style="left:406px;top:184px;width:42px;height:2px;background:#1e6b41"></div>
<div class="a" style="left:406px;top:166px;width:1px;height:19px;background:#c6c6c6"></div><div class="a" style="left:447px;top:166px;width:1px;height:19px;background:#c6c6c6"></div>
<div class="a" style="left:0;top:186px;width:23px;height:22px;background:#e2e2e2"></div>
<div class="a" style="left:22px;top:185px;width:2px;height:24px;background:#1e6b41"></div>
<svg class="a" style="left:4px;top:168px" width="16" height="16"><path d="M15 1 V15 H1 Z" fill="#dcdcdc"/></svg>
<div class="ch" style="left:23px;width:65px;color:#444">A</div>
<div class="ch" style="left:88px;width:65px;color:#444">B</div>
<div class="ch" style="left:153px;width:65px;color:#444">C</div>
<div class="ch" style="left:218px;width:65px;color:#444">D</div>
<div class="ch" style="left:283px;width:41px;color:#444">E</div>
<div class="ch" style="left:324px;width:41px;color:#444">F</div>
<div class="ch" style="left:365px;width:41px;color:#444">G</div>
<div class="ch" style="left:406px;width:41px;color:#1e6b41">H</div>
<div class="ch" style="left:447px;width:41px;color:#444">I</div>
<div class="ch" style="left:488px;width:41px;color:#444">J</div>
<div class="ch" style="left:529px;width:41px;color:#444">K</div>
<div class="ch" style="left:570px;width:41px;color:#444">L</div>
<div class="ch" style="left:611px;width:41px;color:#444">M</div>
<div class="ch" style="left:652px;width:41px;color:#444">N</div>
<div class="ch" style="left:693px;width:41px;color:#444">O</div>
<div class="ch" style="left:734px;width:41px;color:#444">P</div>
<div class="ch" style="left:775px;width:65px;color:#444">Q</div>
<div class="ch" style="left:840px;width:65px;color:#444">R</div>
<div class="ch" style="left:905px;width:65px;color:#444">S</div>
<div class="ch" style="left:970px;width:76px;color:#444">T</div>
<div class="ch" style="left:1046px;width:76px;color:#444">U</div>
<div class="ch" style="left:1122px;width:76px;color:#444">V</div>
<div class="ch" style="left:1198px;width:83px;color:#444">W</div>
<div class="ch" style="left:1281px;width:65px;color:#444">X</div>
<div class="ch" style="left:1346px;width:65px;color:#444">Y</div>
<div class="ch" style="left:1411px;width:65px;color:#444">Z</div>
<div class="rh" style="top:189px;color:#1e6b41">7</div>
<div class="rh" style="top:213px;color:#444">8</div>
<div class="rh" style="top:250px;color:#444">9</div>
<div class="rh" style="top:273px;color:#444">10</div>
<div class="rh" style="top:296px;color:#444">11</div>
<div class="rh" style="top:319px;color:#444">12</div>
<div class="rh" style="top:342px;color:#444">13</div>
<div class="rh" style="top:365px;color:#444">14</div>
<div class="rh" style="top:388px;color:#444">15</div>
<div class="rh" style="top:411px;color:#444">16</div>
<div class="rh" style="top:434px;color:#444">17</div>
<div class="rh" style="top:457px;color:#444">18</div>
<div class="rh" style="top:480px;color:#444">19</div>
<div class="rh" style="top:503px;color:#444">20</div>
<div class="rh" style="top:526px;color:#444">21</div>
<div class="rh" style="top:549px;color:#444">22</div>
<div class="rh" style="top:572px;color:#444">23</div>
<div class="rh" style="top:595px;color:#444">24</div>
<div class="rh" style="top:618px;color:#444">25</div>
<div class="rh" style="top:641px;color:#444">26</div>
<div class="rh" style="top:664px;color:#444">27</div>
<div class="rh" style="top:687px;color:#444">28</div>
<div class="a" style="left:284px;top:209px;width:41px;height:23px;background:#bdd7ee"></div>
<div class="a" style="left:284px;top:232px;width:41px;height:37px;background:#ffff00"></div>
<div class="a" style="left:219px;top:269px;width:65px;height:23px;background:#bdd7ee"></div>
<div class="a" style="left:219px;top:292px;width:980px;height:23px;background:#bdd7ee"></div>
<div class="a" style="left:219px;top:315px;width:1063px;height:23px;background:#bdd7ee"></div>
<div class="a" style="left:219px;top:361px;width:65px;height:23px;background:#ededed"></div>
<div class="a" style="left:219px;top:407px;width:65px;height:23px;background:#ededed"></div>
<div class="a" style="left:219px;top:453px;width:65px;height:23px;background:#ededed"></div>
<div class="a" style="left:219px;top:499px;width:65px;height:23px;background:#ededed"></div>
<div class="a" style="left:219px;top:545px;width:65px;height:23px;background:#ededed"></div>
<div class="a" style="left:219px;top:591px;width:65px;height:23px;background:#ededed"></div>
<div class="a" style="left:1199px;top:361px;width:83px;height:23px;background:#ededed"></div>
<div class="a" style="left:1199px;top:384px;width:83px;height:23px;background:#ededed"></div>
<div class="a" style="left:1199px;top:407px;width:83px;height:23px;background:#ededed"></div>
<div class="a" style="left:1199px;top:430px;width:83px;height:23px;background:#ededed"></div>
<div class="a" style="left:1199px;top:453px;width:83px;height:23px;background:#ededed"></div>
<div class="a" style="left:1199px;top:476px;width:83px;height:23px;background:#ededed"></div>
<div class="a" style="left:1199px;top:499px;width:83px;height:23px;background:#ededed"></div>
<div class="a" style="left:1199px;top:522px;width:83px;height:23px;background:#ededed"></div>
<div class="a" style="left:1199px;top:545px;width:83px;height:23px;background:#ededed"></div>
<div class="a" style="left:1199px;top:568px;width:83px;height:23px;background:#ededed"></div>
<div class="a" style="left:1199px;top:591px;width:83px;height:23px;background:#ededed"></div>
<div class="a" style="left:219px;top:614px;width:1063px;height:23px;background:#d9d9d9"></div>
<div class="a" style="left:284px;top:637px;width:82px;height:23px;background:#fff"></div>
<div class="a" style="left:776px;top:637px;width:130px;height:23px;background:#fff"></div>
<div class="cell l" style="left:284px;top:209px;width:81px;height:22px;padding-left:2px;font-size:13.4px">Data行数</div>
<div class="cell r" style="left:284px;top:232px;width:40px;height:36px;padding-bottom:1px"><span class="nr" style="font-size:13.2px">71</span></div>
<div class="cell r" style="left:284px;top:269px;width:40px;height:22px;padding-bottom:1px"><span class="nr" style="font-size:13.2px">22</span></div>
<div class="cell c" style="left:776px;top:269px;width:64px;height:22px;">倍率</div>
<div class="cell c" style="left:971px;top:269px;width:75px;height:22px;"><span class="nc">10</span></div>
<div class="cell c" style="left:284px;top:292px;width:122px;height:22px;">trade数</div>
<div class="cell c" style="left:407px;top:292px;width:122px;height:22px;;letter-spacing:-1px">勝ち</div>
<div class="cell c" style="left:530px;top:292px;width:122px;height:22px;;letter-spacing:-1px">負け</div>
<div class="cell c" style="left:653px;top:292px;width:122px;height:22px;;letter-spacing:-1px">分け</div>
<div class="cell c" style="left:776px;top:292px;width:194px;height:22px;">勝率</div>
<div class="cell c" style="left:971px;top:292px;width:227px;height:22px;">損益</div>
<div class="cell c" style="left:219px;top:315px;width:64px;height:22px;">月別</div>
<div class="cell c" style="left:284px;top:315px;width:40px;height:22px;;letter-spacing:-1px">買い</div>
<div class="cell c" style="left:325px;top:315px;width:40px;height:22px;;letter-spacing:-1px">売り</div>
<div class="cell c" style="left:366px;top:315px;width:40px;height:22px;">計</div>
<div class="cell c" style="left:407px;top:315px;width:40px;height:22px;;letter-spacing:-1px">買い</div>
<div class="cell c" style="left:448px;top:315px;width:40px;height:22px;;letter-spacing:-1px">売り</div>
<div class="cell c" style="left:489px;top:315px;width:40px;height:22px;">計</div>
<div class="cell c" style="left:530px;top:315px;width:40px;height:22px;;letter-spacing:-1px">買い</div>
<div class="cell c" style="left:571px;top:315px;width:40px;height:22px;;letter-spacing:-1px">売り</div>
<div class="cell c" style="left:612px;top:315px;width:40px;height:22px;">計</div>
<div class="cell c" style="left:653px;top:315px;width:40px;height:22px;;letter-spacing:-1px">買い</div>
<div class="cell c" style="left:694px;top:315px;width:40px;height:22px;;letter-spacing:-1px">売り</div>
<div class="cell c" style="left:735px;top:315px;width:40px;height:22px;">計</div>
<div class="cell c" style="left:776px;top:315px;width:64px;height:22px;;letter-spacing:-1px">買い</div>
<div class="cell c" style="left:841px;top:315px;width:64px;height:22px;;letter-spacing:-1px">売り</div>
<div class="cell c" style="left:906px;top:315px;width:64px;height:22px;">計</div>
<div class="cell c" style="left:971px;top:315px;width:75px;height:22px;;letter-spacing:-1px">買い</div>
<div class="cell c" style="left:1047px;top:315px;width:75px;height:22px;;letter-spacing:-1px">売り</div>
<div class="cell c" style="left:1123px;top:315px;width:75px;height:22px;">計</div>
<div class="cell l" style="left:1199px;top:315px;width:82px;height:22px;padding-left:3px;font-size:13px;letter-spacing:0">損益（累計）</div>
<div class="cell r" style="left:219px;top:338px;width:64px;height:22px;"><span class="nr">1</span></div>
<div class="cell r" style="left:284px;top:338px;width:40px;height:22px;"><span class="nr">25</span></div>
<div class="cell r" style="left:325px;top:338px;width:40px;height:22px;"><span class="nr">40</span></div>
<div class="cell r" style="left:366px;top:338px;width:40px;height:22px;"><span class="nr">65</span></div>
<div class="cell r" style="left:407px;top:338px;width:40px;height:22px;"><span class="nr">20</span></div>
<div class="cell r" style="left:448px;top:338px;width:40px;height:22px;"><span class="nr">22</span></div>
<div class="cell r" style="left:489px;top:338px;width:40px;height:22px;"><span class="nr">42</span></div>
<div class="cell r" style="left:530px;top:338px;width:40px;height:22px;"><span class="nr">5</span></div>
<div class="cell r" style="left:571px;top:338px;width:40px;height:22px;"><span class="nr">18</span></div>
<div class="cell r" style="left:612px;top:338px;width:40px;height:22px;"><span class="nr">23</span></div>
<div class="cell r" style="left:653px;top:338px;width:40px;height:22px;"><span class="nr">0</span></div>
<div class="cell r" style="left:694px;top:338px;width:40px;height:22px;"><span class="nr">0</span></div>
<div class="cell r" style="left:735px;top:338px;width:40px;height:22px;"><span class="nr">0</span></div>
<div class="cell r" style="left:776px;top:338px;width:64px;height:22px;"><span class="nr">80.00</span></div>
<div class="cell r" style="left:841px;top:338px;width:64px;height:22px;"><span class="nr">55.00</span></div>
<div class="cell r" style="left:906px;top:338px;width:64px;height:22px;"><span class="nr">64.62</span></div>
<div class="cell r" style="left:971px;top:338px;width:75px;height:22px;"><span class="nr">3,475</span></div>
<div class="cell r" style="left:1047px;top:338px;width:75px;height:22px;"><span class="nr">2,195</span></div>
<div class="cell r" style="left:1123px;top:338px;width:75px;height:22px;"><span class="nr">5,670</span></div>
<div class="cell r" style="left:1199px;top:338px;width:82px;height:22px;"><span class="nr">5,670</span></div>
<div class="cell r" style="left:219px;top:361px;width:64px;height:22px;"><span class="nr">2</span></div>
<div class="cell r" style="left:284px;top:361px;width:40px;height:22px;"><span class="nr">21</span></div>
<div class="cell r" style="left:325px;top:361px;width:40px;height:22px;"><span class="nr">31</span></div>
<div class="cell r" style="left:366px;top:361px;width:40px;height:22px;"><span class="nr">52</span></div>
<div class="cell r" style="left:407px;top:361px;width:40px;height:22px;"><span class="nr">16</span></div>
<div class="cell r" style="left:448px;top:361px;width:40px;height:22px;"><span class="nr">12</span></div>
<div class="cell r" style="left:489px;top:361px;width:40px;height:22px;"><span class="nr">28</span></div>
<div class="cell r" style="left:530px;top:361px;width:40px;height:22px;"><span class="nr">5</span></div>
<div class="cell r" style="left:571px;top:361px;width:40px;height:22px;"><span class="nr">19</span></div>
<div class="cell r" style="left:612px;top:361px;width:40px;height:22px;"><span class="nr">24</span></div>
<div class="cell r" style="left:653px;top:361px;width:40px;height:22px;"><span class="nr">0</span></div>
<div class="cell r" style="left:694px;top:361px;width:40px;height:22px;"><span class="nr">0</span></div>
<div class="cell r" style="left:735px;top:361px;width:40px;height:22px;"><span class="nr">0</span></div>
<div class="cell r" style="left:776px;top:361px;width:64px;height:22px;"><span class="nr">76.19</span></div>
<div class="cell r" style="left:841px;top:361px;width:64px;height:22px;"><span class="nr">38.71</span></div>
<div class="cell r" style="left:906px;top:361px;width:64px;height:22px;"><span class="nr">53.85</span></div>
<div class="cell r" style="left:971px;top:361px;width:75px;height:22px;"><span class="nr">3,045</span></div>
<div class="cell r" style="left:1047px;top:361px;width:75px;height:22px;color:#ff0000"><span class="nr">-1,150</span></div>
<div class="cell r" style="left:1123px;top:361px;width:75px;height:22px;"><span class="nr">1,895</span></div>
<div class="cell r" style="left:1199px;top:361px;width:82px;height:22px;"><span class="nr">7,565</span></div>
<div class="cell r" style="left:219px;top:384px;width:64px;height:22px;"><span class="nr">3</span></div>
<div class="cell r" style="left:284px;top:384px;width:40px;height:22px;"><span class="nr">0</span></div>
<div class="cell r" style="left:325px;top:384px;width:40px;height:22px;"><span class="nr">0</span></div>
<div class="cell r" style="left:366px;top:384px;width:40px;height:22px;"><span class="nr">0</span></div>
<div class="cell r" style="left:407px;top:384px;width:40px;height:22px;"><span class="nr">0</span></div>
<div class="cell r" style="left:448px;top:384px;width:40px;height:22px;"><span class="nr">0</span></div>
<div class="cell r" style="left:489px;top:384px;width:40px;height:22px;"><span class="nr">0</span></div>
<div class="cell r" style="left:530px;top:384px;width:40px;height:22px;"><span class="nr">0</span></div>
<div class="cell r" style="left:571px;top:384px;width:40px;height:22px;"><span class="nr">0</span></div>
<div class="cell r" style="left:612px;top:384px;width:40px;height:22px;"><span class="nr">0</span></div>
<div class="cell r" style="left:653px;top:384px;width:40px;height:22px;"><span class="nr">0</span></div>
<div class="cell r" style="left:694px;top:384px;width:40px;height:22px;"><span class="nr">0</span></div>
<div class="cell r" style="left:735px;top:384px;width:40px;height:22px;"><span class="nr">0</span></div>
<div class="cell r" style="left:776px;top:384px;width:64px;height:22px;"><span class="nr">0.00</span></div>
<div class="cell r" style="left:841px;top:384px;width:64px;height:22px;"><span class="nr">0.00</span></div>
<div class="cell r" style="left:906px;top:384px;width:64px;height:22px;"><span class="nr">0.00</span></div>
<div class="cell r" style="left:971px;top:384px;width:75px;height:22px;"><span class="nr">0</span></div>
<div class="cell r" style="left:1047px;top:384px;width:75px;height:22px;"><span class="nr">0</span></div>
<div class="cell r" style="left:1123px;top:384px;width:75px;height:22px;"><span class="nr">0</span></div>
<div class="cell r" style="left:1199px;top:384px;width:82px;height:22px;"><span class="nr">7,565</span></div>
<div class="cell r" style="left:219px;top:407px;width:64px;height:22px;"><span class="nr">4</span></div>
<div class="cell r" style="left:284px;top:407px;width:40px;height:22px;"><span class="nr">0</span></div>
<div class="cell r" style="left:325px;top:407px;width:40px;height:22px;"><span class="nr">0</span></div>
<div class="cell r" style="left:366px;top:407px;width:40px;height:22px;"><span class="nr">0</span></div>
<div class="cell r" style="left:407px;top:407px;width:40px;height:22px;"><span class="nr">0</span></div>
<div class="cell r" style="left:448px;top:407px;width:40px;height:22px;"><span class="nr">0</span></div>
<div class="cell r" style="left:489px;top:407px;width:40px;height:22px;"><span class="nr">0</span></div>
<div class="cell r" style="left:530px;top:407px;width:40px;height:22px;"><span class="nr">0</span></div>
<div class="cell r" style="left:571px;top:407px;width:40px;height:22px;"><span class="nr">0</span></div>
<div class="cell r" style="left:612px;top:407px;width:40px;height:22px;"><span class="nr">0</span></div>
<div class="cell r" style="left:653px;top:407px;width:40px;height:22px;"><span class="nr">0</span></div>
<div class="cell r" style="left:694px;top:407px;width:40px;height:22px;"><span class="nr">0</span></div>
<div class="cell r" style="left:735px;top:407px;width:40px;height:22px;"><span class="nr">0</span></div>
<div class="cell r" style="left:776px;top:407px;width:64px;height:22px;"><span class="nr">0.00</span></div>
<div class="cell r" style="left:841px;top:407px;width:64px;height:22px;"><span class="nr">0.00</span></div>
<div class="cell r" style="left:906px;top:407px;width:64px;height:22px;"><span class="nr">0.00</span></div>
<div class="cell r" style="left:971px;top:407px;width:75px;height:22px;"><span class="nr">0</span></div>
<div class="cell r" style="left:1047px;top:407px;width:75px;height:22px;"><span class="nr">0</span></div>
<div class="cell r" style="left:1123px;top:407px;width:75px;height:22px;"><span class="nr">0</span></div>
<div class="cell r" style="left:1199px;top:407px;width:82px;height:22px;"><span class="nr">7,565</span></div>
<div class="cell r" style="left:219px;top:430px;width:64px;height:22px;"><span class="nr">5</span></div>
<div class="cell r" style="left:284px;top:430px;width:40px;height:22px;"><span class="nr">0</span></div>
<div class="cell r" style="left:325px;top:430px;width:40px;height:22px;"><span class="nr">0</span></div>
<div class="cell r" style="left:366px;top:430px;width:40px;height:22px;"><span class="nr">0</span></div>
<div class="cell r" style="left:407px;top:430px;width:40px;height:22px;"><span class="nr">0</span></div>
<div class="cell r" style="left:448px;top:430px;width:40px;height:22px;"><span class="nr">0</span></div>
<div class="cell r" style="left:489px;top:430px;width:40px;height:22px;"><span class="nr">0</span></div>
<div class="cell r" style="left:530px;top:430px;width:40px;height:22px;"><span class="nr">0</span></div>
<div class="cell r" style="left:571px;top:430px;width:40px;height:22px;"><span class="nr">0</span></div>
<div class="cell r" style="left:612px;top:430px;width:40px;height:22px;"><span class="nr">0</span></div>
<div class="cell r" style="left:653px;top:430px;width:40px;height:22px;"><span class="nr">0</span></div>
<div class="cell r" style="left:694px;top:430px;width:40px;height:22px;"><span class="nr">0</span></div>
<div class="cell r" style="left:735px;top:430px;width:40px;height:22px;"><span class="nr">0</span></div>
<div class="cell r" style="left:776px;top:430px;width:64px;height:22px;"><span class="nr">0.00</span></div>
<div class="cell r" style="left:841px;top:430px;width:64px;height:22px;"><span class="nr">0.00</span></div>
<div class="cell r" style="left:906px;top:430px;width:64px;height:22px;"><span class="nr">0.00</span></div>
<div class="cell r" style="left:971px;top:430px;width:75px;height:22px;"><span class="nr">0</span></div>
<div class="cell r" style="left:1047px;top:430px;width:75px;height:22px;"><span class="nr">0</span></div>
<div class="cell r" style="left:1123px;top:430px;width:75px;height:22px;"><span class="nr">0</span></div>
<div class="cell r" style="left:1199px;top:430px;width:82px;height:22px;"><span class="nr">7,565</span></div>
<div class="cell r" style="left:219px;top:453px;width:64px;height:22px;"><span class="nr">6</span></div>
<div class="cell r" style="left:284px;top:453px;width:40px;height:22px;"><span class="nr">0</span></div>
<div class="cell r" style="left:325px;top:453px;width:40px;height:22px;"><span class="nr">0</span></div>
<div class="cell r" style="left:366px;top:453px;width:40px;height:22px;"><span class="nr">0</span></div>
<div class="cell r" style="left:407px;top:453px;width:40px;height:22px;"><span class="nr">0</span></div>
<div class="cell r" style="left:448px;top:453px;width:40px;height:22px;"><span class="nr">0</span></div>
<div class="cell r" style="left:489px;top:453px;width:40px;height:22px;"><span class="nr">0</span></div>
<div class="cell r" style="left:530px;top:453px;width:40px;height:22px;"><span class="nr">0</span></div>
<div class="cell r" style="left:571px;top:453px;width:40px;height:22px;"><span class="nr">0</span></div>
<div class="cell r" style="left:612px;top:453px;width:40px;height:22px;"><span class="nr">0</span></div>
<div class="cell r" style="left:653px;top:453px;width:40px;height:22px;"><span class="nr">0</span></div>
<div class="cell r" style="left:694px;top:453px;width:40px;height:22px;"><span class="nr">0</span></div>
<div class="cell r" style="left:735px;top:453px;width:40px;height:22px;"><span class="nr">0</span></div>
<div class="cell r" style="left:776px;top:453px;width:64px;height:22px;"><span class="nr">0.00</span></div>
<div class="cell r" style="left:841px;top:453px;width:64px;height:22px;"><span class="nr">0.00</span></div>
<div class="cell r" style="left:906px;top:453px;width:64px;height:22px;"><span class="nr">0.00</span></div>
<div class="cell r" style="left:971px;top:453px;width:75px;height:22px;"><span class="nr">0</span></div>
<div class="cell r" style="left:1047px;top:453px;width:75px;height:22px;"><span class="nr">0</span></div>
<div class="cell r" style="left:1123px;top:453px;width:75px;height:22px;"><span class="nr">0</span></div>
<div class="cell r" style="left:1199px;top:453px;width:82px;height:22px;"><span class="nr">7,565</span></div>
<div class="cell r" style="left:219px;top:476px;width:64px;height:22px;"><span class="nr">7</span></div>
<div class="cell r" style="left:284px;top:476px;width:40px;height:22px;"><span class="nr">0</span></div>
<div class="cell r" style="left:325px;top:476px;width:40px;height:22px;"><span class="nr">0</span></div>
<div class="cell r" style="left:366px;top:476px;width:40px;height:22px;"><span class="nr">0</span></div>
<div class="cell r" style="left:407px;top:476px;width:40px;height:22px;"><span class="nr">0</span></div>
<div class="cell r" style="left:448px;top:476px;width:40px;height:22px;"><span class="nr">0</span></div>
<div class="cell r" style="left:489px;top:476px;width:40px;height:22px;"><span class="nr">0</span></div>
<div class="cell r" style="left:530px;top:476px;width:40px;height:22px;"><span class="nr">0</span></div>
<div class="cell r" style="left:571px;top:476px;width:40px;height:22px;"><span class="nr">0</span></div>
<div class="cell r" style="left:612px;top:476px;width:40px;height:22px;"><span class="nr">0</span></div>
<div class="cell r" style="left:653px;top:476px;width:40px;height:22px;"><span class="nr">0</span></div>
<div class="cell r" style="left:694px;top:476px;width:40px;height:22px;"><span class="nr">0</span></div>
<div class="cell r" style="left:735px;top:476px;width:40px;height:22px;"><span class="nr">0</span></div>
<div class="cell r" style="left:776px;top:476px;width:64px;height:22px;"><span class="nr">0.00</span></div>
<div class="cell r" style="left:841px;top:476px;width:64px;height:22px;"><span class="nr">0.00</span></div>
<div class="cell r" style="left:906px;top:476px;width:64px;height:22px;"><span class="nr">0.00</span></div>
<div class="cell r" style="left:971px;top:476px;width:75px;height:22px;"><span class="nr">0</span></div>
<div class="cell r" style="left:1047px;top:476px;width:75px;height:22px;"><span class="nr">0</span></div>
<div class="cell r" style="left:1123px;top:476px;width:75px;height:22px;"><span class="nr">0</span></div>
<div class="cell r" style="left:1199px;top:476px;width:82px;height:22px;"><span class="nr">7,565</span></div>
<div class="cell r" style="left:219px;top:499px;width:64px;height:22px;"><span class="nr">8</span></div>
<div class="cell r" style="left:284px;top:499px;width:40px;height:22px;"><span class="nr">0</span></div>
<div class="cell r" style="left:325px;top:499px;width:40px;height:22px;"><span class="nr">0</span></div>
<div class="cell r" style="left:366px;top:499px;width:40px;height:22px;"><span class="nr">0</span></div>
<div class="cell r" style="left:407px;top:499px;width:40px;height:22px;"><span class="nr">0</span></div>
<div class="cell r" style="left:448px;top:499px;width:40px;height:22px;"><span class="nr">0</span></div>
<div class="cell r" style="left:489px;top:499px;width:40px;height:22px;"><span class="nr">0</span></div>
<div class="cell r" style="left:530px;top:499px;width:40px;height:22px;"><span class="nr">0</span></div>
<div class="cell r" style="left:571px;top:499px;width:40px;height:22px;"><span class="nr">0</span></div>
<div class="cell r" style="left:612px;top:499px;width:40px;height:22px;"><span class="nr">0</span></div>
<div class="cell r" style="left:653px;top:499px;width:40px;height:22px;"><span class="nr">0</span></div>
<div class="cell r" style="left:694px;top:499px;width:40px;height:22px;"><span class="nr">0</span></div>
<div class="cell r" style="left:735px;top:499px;width:40px;height:22px;"><span class="nr">0</span></div>
<div class="cell r" style="left:776px;top:499px;width:64px;height:22px;"><span class="nr">0.00</span></div>
<div class="cell r" style="left:841px;top:499px;width:64px;height:22px;"><span class="nr">0.00</span></div>
<div class="cell r" style="left:906px;top:499px;width:64px;height:22px;"><span class="nr">0.00</span></div>
<div class="cell r" style="left:971px;top:499px;width:75px;height:22px;"><span class="nr">0</span></div>
<div class="cell r" style="left:1047px;top:499px;width:75px;height:22px;"><span class="nr">0</span></div>
<div class="cell r" style="left:1123px;top:499px;width:75px;height:22px;"><span class="nr">0</span></div>
<div class="cell r" style="left:1199px;top:499px;width:82px;height:22px;"><span class="nr">7,565</span></div>
<div class="cell r" style="left:219px;top:522px;width:64px;height:22px;"><span class="nr">9</span></div>
<div class="cell r" style="left:284px;top:522px;width:40px;height:22px;"><span class="nr">0</span></div>
<div class="cell r" style="left:325px;top:522px;width:40px;height:22px;"><span class="nr">0</span></div>
<div class="cell r" style="left:366px;top:522px;width:40px;height:22px;"><span class="nr">0</span></div>
<div class="cell r" style="left:407px;top:522px;width:40px;height:22px;"><span class="nr">0</span></div>
<div class="cell r" style="left:448px;top:522px;width:40px;height:22px;"><span class="nr">0</span></div>
<div class="cell r" style="left:489px;top:522px;width:40px;height:22px;"><span class="nr">0</span></div>
<div class="cell r" style="left:530px;top:522px;width:40px;height:22px;"><span class="nr">0</span></div>
<div class="cell r" style="left:571px;top:522px;width:40px;height:22px;"><span class="nr">0</span></div>
<div class="cell r" style="left:612px;top:522px;width:40px;height:22px;"><span class="nr">0</span></div>
<div class="cell r" style="left:653px;top:522px;width:40px;height:22px;"><span class="nr">0</span></div>
<div class="cell r" style="left:694px;top:522px;width:40px;height:22px;"><span class="nr">0</span></div>
<div class="cell r" style="left:735px;top:522px;width:40px;height:22px;"><span class="nr">0</span></div>
<div class="cell r" style="left:776px;top:522px;width:64px;height:22px;"><span class="nr">0.00</span></div>
<div class="cell r" style="left:841px;top:522px;width:64px;height:22px;"><span class="nr">0.00</span></div>
<div class="cell r" style="left:906px;top:522px;width:64px;height:22px;"><span class="nr">0.00</span></div>
<div class="cell r" style="left:971px;top:522px;width:75px;height:22px;"><span class="nr">0</span></div>
<div class="cell r" style="left:1047px;top:522px;width:75px;height:22px;"><span class="nr">0</span></div>
<div class="cell r" style="left:1123px;top:522px;width:75px;height:22px;"><span class="nr">0</span></div>
<div class="cell r" style="left:1199px;top:522px;width:82px;height:22px;"><span class="nr">7,565</span></div>
<div class="cell r" style="left:219px;top:545px;width:64px;height:22px;"><span class="nr">10</span></div>
<div class="cell r" style="left:284px;top:545px;width:40px;height:22px;"><span class="nr">0</span></div>
<div class="cell r" style="left:325px;top:545px;width:40px;height:22px;"><span class="nr">0</span></div>
<div class="cell r" style="left:366px;top:545px;width:40px;height:22px;"><span class="nr">0</span></div>
<div class="cell r" style="left:407px;top:545px;width:40px;height:22px;"><span class="nr">0</span></div>
<div class="cell r" style="left:448px;top:545px;width:40px;height:22px;"><span class="nr">0</span></div>
<div class="cell r" style="left:489px;top:545px;width:40px;height:22px;"><span class="nr">0</span></div>
<div class="cell r" style="left:530px;top:545px;width:40px;height:22px;"><span class="nr">0</span></div>
<div class="cell r" style="left:571px;top:545px;width:40px;height:22px;"><span class="nr">0</span></div>
<div class="cell r" style="left:612px;top:545px;width:40px;height:22px;"><span class="nr">0</span></div>
<div class="cell r" style="left:653px;top:545px;width:40px;height:22px;"><span class="nr">0</span></div>
<div class="cell r" style="left:694px;top:545px;width:40px;height:22px;"><span class="nr">0</span></div>
<div class="cell r" style="left:735px;top:545px;width:40px;height:22px;"><span class="nr">0</span></div>
<div class="cell r" style="left:776px;top:545px;width:64px;height:22px;"><span class="nr">0.00</span></div>
<div class="cell r" style="left:841px;top:545px;width:64px;height:22px;"><span class="nr">0.00</span></div>
<div class="cell r" style="left:906px;top:545px;width:64px;height:22px;"><span class="nr">0.00</span></div>
<div class="cell r" style="left:971px;top:545px;width:75px;height:22px;"><span class="nr">0</span></div>
<div class="cell r" style="left:1047px;top:545px;width:75px;height:22px;"><span class="nr">0</span></div>
<div class="cell r" style="left:1123px;top:545px;width:75px;height:22px;"><span class="nr">0</span></div>
<div class="cell r" style="left:1199px;top:545px;width:82px;height:22px;"><span class="nr">7,565</span></div>
<div class="cell r" style="left:219px;top:568px;width:64px;height:22px;"><span class="nr">11</span></div>
<div class="cell r" style="left:284px;top:568px;width:40px;height:22px;"><span class="nr">0</span></div>
<div class="cell r" style="left:325px;top:568px;width:40px;height:22px;"><span class="nr">0</span></div>
<div class="cell r" style="left:366px;top:568px;width:40px;height:22px;"><span class="nr">0</span></div>
<div class="cell r" style="left:407px;top:568px;width:40px;height:22px;"><span class="nr">0</span></div>
<div class="cell r" style="left:448px;top:568px;width:40px;height:22px;"><span class="nr">0</span></div>
<div class="cell r" style="left:489px;top:568px;width:40px;height:22px;"><span class="nr">0</span></div>
<div class="cell r" style="left:530px;top:568px;width:40px;height:22px;"><span class="nr">0</span></div>
<div class="cell r" style="left:571px;top:568px;width:40px;height:22px;"><span class="nr">0</span></div>
<div class="cell r" style="left:612px;top:568px;width:40px;height:22px;"><span class="nr">0</span></div>
<div class="cell r" style="left:653px;top:568px;width:40px;height:22px;"><span class="nr">0</span></div>
<div class="cell r" style="left:694px;top:568px;width:40px;height:22px;"><span class="nr">0</span></div>
<div class="cell r" style="left:735px;top:568px;width:40px;height:22px;"><span class="nr">0</span></div>
<div class="cell r" style="left:776px;top:568px;width:64px;height:22px;"><span class="nr">0.00</span></div>
<div class="cell r" style="left:841px;top:568px;width:64px;height:22px;"><span class="nr">0.00</span></div>
<div class="cell r" style="left:906px;top:568px;width:64px;height:22px;"><span class="nr">0.00</span></div>
<div class="cell r" style="left:971px;top:568px;width:75px;height:22px;"><span class="nr">0</span></div>
<div class="cell r" style="left:1047px;top:568px;width:75px;height:22px;"><span class="nr">0</span></div>
<div class="cell r" style="left:1123px;top:568px;width:75px;height:22px;"><span class="nr">0</span></div>
<div class="cell r" style="left:1199px;top:568px;width:82px;height:22px;"><span class="nr">7,565</span></div>
<div class="cell r" style="left:219px;top:591px;width:64px;height:22px;"><span class="nr">12</span></div>
<div class="cell r" style="left:284px;top:591px;width:40px;height:22px;"><span class="nr">0</span></div>
<div class="cell r" style="left:325px;top:591px;width:40px;height:22px;"><span class="nr">0</span></div>
<div class="cell r" style="left:366px;top:591px;width:40px;height:22px;"><span class="nr">0</span></div>
<div class="cell r" style="left:407px;top:591px;width:40px;height:22px;"><span class="nr">0</span></div>
<div class="cell r" style="left:448px;top:591px;width:40px;height:22px;"><span class="nr">0</span></div>
<div class="cell r" style="left:489px;top:591px;width:40px;height:22px;"><span class="nr">0</span></div>
<div class="cell r" style="left:530px;top:591px;width:40px;height:22px;"><span class="nr">0</span></div>
<div class="cell r" style="left:571px;top:591px;width:40px;height:22px;"><span class="nr">0</span></div>
<div class="cell r" style="left:612px;top:591px;width:40px;height:22px;"><span class="nr">0</span></div>
<div class="cell r" style="left:653px;top:591px;width:40px;height:22px;"><span class="nr">0</span></div>
<div class="cell r" style="left:694px;top:591px;width:40px;height:22px;"><span class="nr">0</span></div>
<div class="cell r" style="left:735px;top:591px;width:40px;height:22px;"><span class="nr">0</span></div>
<div class="cell r" style="left:776px;top:591px;width:64px;height:22px;"><span class="nr">0.00</span></div>
<div class="cell r" style="left:841px;top:591px;width:64px;height:22px;"><span class="nr">0.00</span></div>
<div class="cell r" style="left:906px;top:591px;width:64px;height:22px;"><span class="nr">0.00</span></div>
<div class="cell r" style="left:971px;top:591px;width:75px;height:22px;"><span class="nr">0</span></div>
<div class="cell r" style="left:1047px;top:591px;width:75px;height:22px;"><span class="nr">0</span></div>
<div class="cell r" style="left:1123px;top:591px;width:75px;height:22px;"><span class="nr">0</span></div>
<div class="cell r" style="left:1199px;top:591px;width:82px;height:22px;"><span class="nr">7,565</span></div>
<div class="cell c" style="left:219px;top:614px;width:64px;height:22px;">年間計</div>
<div class="cell r" style="left:284px;top:614px;width:40px;height:22px;"><span class="nr">46</span></div>
<div class="cell r" style="left:325px;top:614px;width:40px;height:22px;"><span class="nr">71</span></div>
<div class="cell r" style="left:366px;top:614px;width:40px;height:22px;"><span class="nr">117</span></div>
<div class="cell r" style="left:407px;top:614px;width:40px;height:22px;"><span class="nr">36</span></div>
<div class="cell r" style="left:448px;top:614px;width:40px;height:22px;"><span class="nr">34</span></div>
<div class="cell r" style="left:489px;top:614px;width:40px;height:22px;"><span class="nr">70</span></div>
<div class="cell r" style="left:530px;top:614px;width:40px;height:22px;"><span class="nr">10</span></div>
<div class="cell r" style="left:571px;top:614px;width:40px;height:22px;"><span class="nr">37</span></div>
<div class="cell r" style="left:612px;top:614px;width:40px;height:22px;"><span class="nr">47</span></div>
<div class="cell r" style="left:653px;top:614px;width:40px;height:22px;"><span class="nr">0</span></div>
<div class="cell r" style="left:694px;top:614px;width:40px;height:22px;"><span class="nr">0</span></div>
<div class="cell r" style="left:735px;top:614px;width:40px;height:22px;"><span class="nr">0</span></div>
<div class="cell r" style="left:776px;top:614px;width:64px;height:22px;"><span class="nr">78.26</span></div>
<div class="cell r" style="left:841px;top:614px;width:64px;height:22px;"><span class="nr">47.89</span></div>
<div class="cell r" style="left:906px;top:614px;width:64px;height:22px;"><span class="nr">59.83</span></div>
<div class="cell r" style="left:971px;top:614px;width:75px;height:22px;font-weight:bold"><span class="nr">6,520</span></div>
<div class="cell r" style="left:1047px;top:614px;width:75px;height:22px;font-weight:bold"><span class="nr">1,045</span></div>
<div class="cell r" style="left:1123px;top:614px;width:75px;height:22px;font-weight:bold"><span class="nr">7,565</span></div>
<div class="cell l" style="left:219px;top:637px;width:64px;height:22px;">手数料</div>
<div class="cell c" style="left:284px;top:637px;width:81px;height:22px;"><span class="nc">1,012</span></div>
<div class="cell l" style="left:776px;top:637px;width:129px;height:22px;">手数料控除後</div>
<div class="cell r" style="left:971px;top:637px;width:75px;height:22px;"><span class="nr" style="font-size:13.2px">64,188</span></div>
<div class="bl" style="left:283px;top:208px;width:42px;height:1px"></div>
<div class="bl" style="left:283px;top:208px;width:1px;height:61px"></div>
<div class="bl" style="left:283px;top:231px;width:42px;height:1px"></div>
<div class="bl" style="left:324px;top:231px;width:1px;height:61px"></div>
<div class="bl" style="left:218px;top:268px;width:107px;height:1px"></div>
<div class="bl" style="left:218px;top:268px;width:1px;height:47px"></div>
<div class="bl" style="left:283px;top:268px;width:1px;height:24px"></div>
<div class="bl" style="left:218px;top:291px;width:1064px;height:1px"></div>
<div class="bl" style="left:218px;top:291px;width:1px;height:24px"></div>
<div class="bl" style="left:283px;top:291px;width:1px;height:24px"></div>
<div class="bl" style="left:406px;top:291px;width:1px;height:24px"></div>
<div class="bl" style="left:529px;top:291px;width:1px;height:24px"></div>
<div class="bl" style="left:652px;top:291px;width:1px;height:24px"></div>
<div class="bl" style="left:775px;top:291px;width:1px;height:24px"></div>
<div class="bl" style="left:970px;top:291px;width:1px;height:24px"></div>
<div class="bl" style="left:1198px;top:291px;width:1px;height:24px"></div>
<div class="bl" style="left:1281px;top:291px;width:1px;height:24px"></div>
<div class="bl" style="left:218px;top:314px;width:1064px;height:1px"></div>
<div class="bl" style="left:218px;top:337px;width:1064px;height:1px"></div>
<div class="bl" style="left:218px;top:360px;width:1064px;height:1px"></div>
<div class="bl" style="left:218px;top:383px;width:1064px;height:1px"></div>
<div class="bl" style="left:218px;top:406px;width:1064px;height:1px"></div>
<div class="bl" style="left:218px;top:429px;width:1064px;height:1px"></div>
<div class="bl" style="left:218px;top:452px;width:1064px;height:1px"></div>
<div class="bl" style="left:218px;top:475px;width:1064px;height:1px"></div>
<div class="bl" style="left:218px;top:498px;width:1064px;height:1px"></div>
<div class="bl" style="left:218px;top:521px;width:1064px;height:1px"></div>
<div class="bl" style="left:218px;top:544px;width:1064px;height:1px"></div>
<div class="bl" style="left:218px;top:567px;width:1064px;height:1px"></div>
<div class="bl" style="left:218px;top:590px;width:1064px;height:1px"></div>
<div class="bl" style="left:218px;top:613px;width:1064px;height:1px"></div>
<div class="bl" style="left:218px;top:636px;width:1064px;height:1px"></div>
<div class="bl" style="left:218px;top:314px;width:1px;height:323px"></div>
<div class="bl" style="left:283px;top:314px;width:1px;height:323px"></div>
<div class="bl" style="left:324px;top:314px;width:1px;height:323px"></div>
<div class="bl" style="left:365px;top:314px;width:1px;height:323px"></div>
<div class="bl" style="left:406px;top:314px;width:1px;height:323px"></div>
<div class="bl" style="left:447px;top:314px;width:1px;height:323px"></div>
<div class="bl" style="left:488px;top:314px;width:1px;height:323px"></div>
<div class="bl" style="left:529px;top:314px;width:1px;height:323px"></div>
<div class="bl" style="left:570px;top:314px;width:1px;height:323px"></div>
<div class="bl" style="left:611px;top:314px;width:1px;height:323px"></div>
<div class="bl" style="left:652px;top:314px;width:1px;height:323px"></div>
<div class="bl" style="left:693px;top:314px;width:1px;height:323px"></div>
<div class="bl" style="left:734px;top:314px;width:1px;height:323px"></div>
<div class="bl" style="left:775px;top:314px;width:1px;height:323px"></div>
<div class="bl" style="left:840px;top:314px;width:1px;height:323px"></div>
<div class="bl" style="left:905px;top:314px;width:1px;height:323px"></div>
<div class="bl" style="left:970px;top:314px;width:1px;height:323px"></div>
<div class="bl" style="left:1046px;top:314px;width:1px;height:323px"></div>
<div class="bl" style="left:1122px;top:314px;width:1px;height:323px"></div>
<div class="bl" style="left:1198px;top:314px;width:1px;height:323px"></div>
<div class="bl" style="left:1281px;top:613px;width:1px;height:24px"></div>
<div class="bl" style="left:217px;top:314px;width:1px;height:300px"></div>
<div class="bl" style="left:219px;top:314px;width:1px;height:300px"></div>
<div class="a" style="left:218px;top:315px;width:1px;height:298px;background:#fff"></div>
<div class="bl" style="left:1280px;top:314px;width:1px;height:300px"></div>
<div class="bl" style="left:1282px;top:314px;width:1px;height:300px"></div>
<div class="bl" style="left:218px;top:659px;width:148px;height:1px"></div>
<div class="bl" style="left:218px;top:636px;width:1px;height:24px"></div>
<div class="bl" style="left:283px;top:636px;width:1px;height:24px"></div>
<div class="bl" style="left:365px;top:636px;width:1px;height:24px"></div>
<div class="bl" style="left:775px;top:659px;width:272px;height:1px"></div>
<div class="bl" style="left:775px;top:636px;width:1px;height:24px"></div>
<div class="bl" style="left:905px;top:636px;width:1px;height:24px"></div>
<div class="bl" style="left:970px;top:636px;width:1px;height:24px"></div>
<div class="bl" style="left:1046px;top:636px;width:1px;height:24px"></div>
<div class="a" style="left:528px;top:207px;width:519px;height:62px;border:2px solid #000;background:#fff"></div>
<div class="cell c" style="left:530px;top:209px;width:515px;height:58px;font-size:22px;padding-bottom:0px">実績月別表</div>
<div class="a" style="left:405px;top:184px;width:44px;height:26px;border:2px solid #1e6b41"></div>
<div class="a" style="left:444px;top:205px;width:7px;height:7px;background:#1e6b41;border:1px solid #fff"></div>
</div></div>
<svg class="a" style="left:1570px;top:160px" width="14" height="10" fill="none" stroke="#333" stroke-width="1.2"><path d="M2 2.5 L7 7.5 L12 2.5"/></svg>
<div class="a" style="left:1200px;top:660px;width:247px;height:40.500px;overflow:hidden"><div class="a" style="left:-1200px;top:-660px;width:1600px;height:900px">
<div class="a" style="left:1234px;top:677px;width:183px;height:92px;background:#f7f7f7;border:1px solid #cfcfcf;border-radius:8px;box-shadow:0 3px 12px rgba(0,0,0,.25)"></div>
<div class="a" style="left:1256.500px;top:678px;width:1px;height:90px;background:#d9d9d9"></div>
<div class="a" style="left:1244px;top:687px;width:2.500px;height:30px;background:#6e6e6e;border-radius:1px"></div>
<span class="t" style="left:1265.5px;top:683.5px;font-size:25px;color:#3a3a3a;font-weight:normal;transform:scaleX(.8);transform-origin:0 0;font-family:'Liberation Sans',sans-serif">A</span>
<svg class="a" style="left:1296px;top:683px" width="20" height="20" fill="none" stroke="#333" stroke-width="1.3"><path d="M3.5 17 V6.5 L6 3 L8.5 6.5 V9"/><circle cx="12.5" cy="4.5" r="2.2"/><path d="M9.5 9 H15.5 V17"/><path d="M5 17 L11 11"/><circle cx="11.5" cy="11" r="1.3"/></svg>
<svg class="a" style="left:1327px;top:683px" width="22" height="20" fill="none" stroke="#333" stroke-width="1.4"><path d="M2.5 17 V4 A2 2 0 0 1 4.5 2 H13 A2 2 0 0 1 15 4 V10"/><rect x="5" y="4.5" width="7.5" height="2.5" rx="0.6"/><circle cx="15" cy="14" r="5" fill="#222" stroke="none"/><path d="M15 11.5 V16.5 M12.5 14 H17.5" stroke="#fff" stroke-width="1.5"/></svg>
<span class="t" style="left:1359px;top:683px;font-size:10.500px;color:#333;letter-spacing:-1px">かな</span>
<span class="t" style="left:1359px;top:697px;font-size:10.500px;color:#333;letter-spacing:-1px">カナ</span>
<svg class="a" style="left:1390px;top:684px" width="22" height="22" viewBox="0 0 22 22" fill="none" stroke="#333" stroke-width="1.4"><circle cx="11" cy="11.5" r="3.2"/><path d="M9.3 2.5 H12.7 L13.3 5 L15.5 6.2 L18 5.4 L19.7 8.3 L17.9 10.2 V12.8 L19.7 14.7 L18 17.6 L15.5 16.8 L13.3 18 L12.7 20.5 H9.3 L8.7 18 L6.5 16.8 L4 17.6 L2.3 14.7 L4.1 12.8 V10.2 L2.3 8.3 L4 5.4 L6.5 6.2 L8.7 5 Z" stroke-linejoin="round"/></svg>
</div></div>
<div class="a" style="left:1.5px;top:700.5px;width:1445.5px;height:91.5px;background:#fff"></div>
<div class="a" style="left:1230px;top:792px;width:200px;height:14px;overflow:hidden"><div class="a" style="left:-1230px;top:-792px;width:1600px;height:900px">
<div class="a" style="left:1235px;top:712px;width:183px;height:92px;background:#f7f7f7;border:1px solid #cfcfcf;border-radius:8px;box-shadow:0 3px 10px rgba(0,0,0,.25)"></div>
<div class="a" style="left:1258.5px;top:713px;width:1px;height:90px;background:#d9d9d9"></div>
<div class="a" style="left:1246px;top:792px;width:2px;height:2.500px;background:#555"></div>
<svg class="a" style="left:1262px;top:787px" width="150" height="14" fill="none" stroke="#333" stroke-width="1.4"><path d="M6.5 11 L10 0 M14 0 L17.5 11"/><path d="M38 11.5 L42 6.5 H52 V11.5 Z"/><path d="M69 7 V9.5 H76"/><circle cx="82" cy="5" r="5" fill="#222" stroke="none"/><path d="M106 0 L101 13 M112 0 C113 6 111.5 10 108 13"/><path d="M134 7 H136 M146 7 H148 M138.5 8 C139 12 143 12 143.5 8"/></svg>
</div></div>
<div class="a" style="left:0;top:798px;width:1600px;height:32px;background:#e8ebf0"></div>
<div class="a" style="left:0;top:797.500px;width:1580px;height:1px;background:#d6d8dc"></div>
<div class="a" style="left:1230px;top:797px;width:200px;height:12px;overflow:hidden"><div class="a" style="left:-1230px;top:-797px;width:1600px;height:900px">
<div class="a" style="left:1235px;top:712px;width:183px;height:92px;background:#f7f7f7;border:1px solid #cfcfcf;border-radius:8px;box-shadow:0 3px 10px rgba(0,0,0,.25)"></div>
<div class="a" style="left:1258.5px;top:713px;width:1px;height:90px;background:#d9d9d9"></div>
</div></div>
<svg class="a" style="left:26px;top:808px" width="10" height="12" fill="none" stroke="#8a8a8a" stroke-width="1.2"><path d="M7.5 1 L2.5 6 L7.5 11"/></svg>
<svg class="a" style="left:59px;top:808px" width="10" height="12" fill="none" stroke="#8a8a8a" stroke-width="1.2"><path d="M2.5 1 L7.5 6 L2.5 11"/></svg>
<span id="t48" class="t" style="left:125.5px;top:807.8px;font-size:14.5px;color:#333;font-weight:normal;transform-origin:0 50%;transform:scaleX(0.9702);">Main</span>
<div class="a" style="left:171px;top:805px;width:1px;height:18px;background:#c9ccd1"></div>
<span id="t49" class="t" style="left:187.5px;top:807.8px;font-size:14.5px;color:#333;font-weight:normal;transform-origin:0 50%;transform:scaleX(0.9882);">Record</span>
<div class="a" style="left:248px;top:805px;width:1px;height:18px;background:#c9ccd1"></div>
<div class="a" style="left:253px;top:797px;width:45px;height:29px;background:#fff;border-radius:0 0 5px 5px;box-shadow:0 1px 2px rgba(0,0,0,.15)"></div>
<span id="t50" class="t" style="left:261.0px;top:804.5px;font-size:14px;color:#222;font-weight:normal;transform-origin:0 50%;transform:scaleX(0.9893);">統計</span>
<div class="a" style="left:261px;top:821px;width:28px;height:2px;background:#107c41"></div>
<div class="a" style="left:301px;top:805px;width:1px;height:18px;background:#c9ccd1"></div>
<svg class="a" style="left:343px;top:808px" width="12" height="12" stroke="#333" stroke-width="1.1"><path d="M6 0.5 V11.5 M0.5 6 H11.5"/></svg>
<div class="a" style="left:962px;top:810px;width:2px;height:2px;background:#222"></div>
<div class="a" style="left:962px;top:814.5px;width:2px;height:2px;background:#222"></div>
<div class="a" style="left:962px;top:819px;width:2px;height:2px;background:#222"></div>
<div class="a" style="left:979px;top:805px;width:601px;height:17px;background:#f5f5f5;border-radius:9px"></div>
<svg class="a" style="left:983px;top:808px" width="9" height="11"><path d="M1 5.5 L7.5 1 V10 Z" fill="#6a6a6a" stroke="#6a6a6a" stroke-width="1" stroke-linejoin="round"/></svg>
<svg class="a" style="left:1567px;top:808px" width="9" height="11"><path d="M8 5.5 L1.5 1 V10 Z" fill="#6a6a6a" stroke="#6a6a6a" stroke-width="1" stroke-linejoin="round"/></svg>
<div class="a" style="left:996px;top:809px;width:546px;height:9px;background:#6a6a6a;border-radius:5px"></div>
<div class="a" style="left:0;top:830px;width:1600px;height:22px;background:#f3f3f3"></div>
<span id="t51" class="t" style="left:11.0px;top:835.8px;font-size:12.5px;color:#333;font-weight:normal;transform-origin:0 50%;transform:scaleX(0.9537);">準備完了</span>
<span id="t52" class="t" style="left:78.0px;top:835.8px;font-size:12.5px;color:#333;font-weight:normal;transform-origin:0 50%;transform:scaleX(1.0230);">ScrollLock</span>
<svg class="a" style="left:153px;top:834px" width="16" height="16" fill="none" stroke="#333" stroke-width="1.1"><path d="M1.5 14 V2.5 H14.5 V6"/><path d="M1.5 5.5 H14.5 M3.5 8.5 H7 M3.5 11.5 H6"/><circle cx="11" cy="11" r="3.6"/><circle cx="11" cy="11" r="1.3" fill="#333"/></svg>
<svg class="a" style="left:185px;top:833px" width="17" height="17" fill="none" stroke="#333" stroke-width="1.1"><circle cx="7" cy="3" r="1.8"/><path d="M1.5 6 C4 7.5 10 7.5 12.5 6 M5 7 V10 L2.5 15 M9 7 V9.5"/><path d="M9.5 10.5 L15 16 M15 10.5 L9.5 16"/></svg>
<span id="t53" class="t" style="left:204.5px;top:835.8px;font-size:12.5px;color:#222;font-weight:normal;transform-origin:0 50%;transform:scaleX(0.8364);">アクセシビリティ: 検討が必要です</span>
<div class="a" style="left:1294px;top:830.5px;width:40px;height:22px;background:#dadada"></div>
<svg class="a" style="left:1306px;top:834px" width="15" height="15" fill="none" stroke="#333" stroke-width="1"><rect x="1.5" y="1.5" width="12" height="12"/><path d="M5.5 1.5 V13.5 M9.5 1.5 V13.5 M1.5 5.5 H13.5 M1.5 9.5 H13.5"/></svg>
<svg class="a" style="left:1346px;top:834px" width="15" height="15" fill="none" stroke="#333" stroke-width="1"><rect x="1.5" y="1.5" width="12" height="12"/><rect x="4.5" y="4.5" width="6" height="6"/><path d="M6 6.5 H9 M6 8.5 H9" stroke-width="0.8"/></svg>
<svg class="a" style="left:1386px;top:834px" width="15" height="15" fill="none" stroke="#333" stroke-width="1"><rect x="1.5" y="1.5" width="12" height="12"/><path d="M1.5 8.5 H9.5 V1.5 M5.5 1.5 V8.5"/></svg>
<div class="a" style="left:1420px;top:841px;width:7px;height:1px;background:#333"></div>
<div class="a" style="left:1433px;top:841px;width:99px;height:1px;background:#777"></div>
<div class="a" style="left:1482px;top:838px;width:1px;height:7px;background:#777"></div>
<div class="a" style="left:1476px;top:835px;width:4px;height:14px;background:#555"></div>
<svg class="a" style="left:1537px;top:837px" width="9" height="9" stroke="#333" stroke-width="1"><path d="M4.5 0 V9 M0 4.5 H9"/></svg>
<span id="t54" class="t" style="left:1559.0px;top:835.2px;font-size:12.5px;color:#333;font-weight:normal;transform-origin:0 50%;transform:scaleX(0.9988);">90%</span>
<div class="a" style="left:0;top:852px;width:1600px;height:48px;background:linear-gradient(90deg,#1d2230 0%,#1c2333 18%,#1a2840 30%,#182a47 50%,#172842 70%,#1c212b 86%,#1c2029 100%)"></div>
<svg class="a" style="left:16px;top:860px" width="30" height="30" viewBox="0 0 30 30"><path d="M11 3 A7.5 7.5 0 1 0 17.5 12 A6 6 0 0 1 11 3Z" fill="#f5a524"/><path d="M7 27 A4.5 4.5 0 0 1 6.5 18 A6 6 0 0 1 17.5 15.5 A5 5 0 0 1 26 19.5 A3.8 3.8 0 0 1 24.5 27 Z" fill="#dfe9f6"/><path d="M7 27 A4.5 4.5 0 0 1 3.5 23 H27.8 A3.8 3.8 0 0 1 24.5 27 Z" fill="#a9c4e6"/></svg>
<span id="t55" class="t" style="left:51.0px;top:862.0px;font-size:12px;color:#fff;font-weight:normal;transform-origin:0 50%;transform:scaleX(0.8578);">12°C</span>
<span id="t56" class="t" style="left:50.0px;top:878.0px;font-size:12px;color:#fff;font-weight:normal;transform-origin:0 50%;transform:scaleX(0.8451);">くもり時々晴れ</span>
<svg class="a" style="left:478px;top:864px" width="24" height="24"><defs><linearGradient id="wg" x1="0" y1="0" x2="1" y2="1"><stop offset="0" stop-color="#7ee7fb"/><stop offset="1" stop-color="#1592ef"/></linearGradient></defs><rect x="0.5" y="0.5" width="11" height="11" rx="1" fill="url(#wg)"/><rect x="12.5" y="0.5" width="11" height="11" rx="1" fill="#3fbdf5"/><rect x="0.5" y="12.5" width="11" height="11" rx="1" fill="#3fbdf5"/><rect x="12.5" y="12.5" width="11" height="11" rx="1" fill="#1c9bf0"/></svg>
<div class="a" style="left:516px;top:861px;width:218px;height:30px;background:#f0f2f5;border-radius:15px"></div>
<svg class="a" style="left:526px;top:868px" width="17" height="17" fill="none" stroke="#222" stroke-width="1.8"><circle cx="7" cy="7" r="5"/><path d="M10.8 10.8 L15 15" stroke-linecap="round"/></svg>
<span id="t57" class="t" style="left:552.0px;top:869.2px;font-size:13.5px;color:#6a6a6a;font-weight:normal;transform-origin:0 50%;transform:scaleX(1.0000);">検索</span>
<svg class="a" style="left:684px;top:866px" width="46" height="24" viewBox="0 0 46 24"><path d="M0 22 L20 1.5 C22 0 25 0 27 2 L40 22 Z" fill="#4d78c4"/><path d="M14.5 7 L20 1.5 C22 0 25 0 27 2 L31 8 L27 6.5 L24 9 L21 6.5 L18 8.5 Z" fill="#e8dfe6"/><path d="M0 22 C10 18 30 18 42 22 Z" fill="#9bb544"/><circle cx="34" cy="9" r="4.5" fill="#f8b7cb"/><circle cx="41.5" cy="11" r="3.2" fill="#f5a3bd"/><circle cx="38" cy="17" r="3.8" fill="#fac8d6"/><circle cx="34" cy="9" r="1.2" fill="#e2557d"/><path d="M36 22 L42 14" stroke="#7a4a2b" stroke-width="1.3"/></svg>
<svg class="a" style="left:746px;top:864px" width="26" height="24"><rect x="7.5" y="0.5" width="18" height="15" rx="2" fill="#f2f2f2"/><rect x="0.5" y="7.5" width="18" height="15" rx="2" fill="#6c6c6c" opacity="0.920"/><rect x="7.5" y="7.5" width="11" height="8" fill="#c9c9c9"/></svg>
<svg class="a" style="left:791px;top:865px" width="24" height="22" viewBox="0 0 24 22"><defs><linearGradient id="cp1" x1="0" y1="0" x2="0" y2="1"><stop offset="0" stop-color="#2b7fe0"/><stop offset=".35" stop-color="#35c27a"/><stop offset=".65" stop-color="#f2d327"/><stop offset="1" stop-color="#f0642c"/></linearGradient><linearGradient id="cp2" x1="0" y1="0" x2="0" y2="1"><stop offset="0" stop-color="#2c6fe0"/><stop offset=".4" stop-color="#a05ae0"/><stop offset=".75" stop-color="#f0629a"/><stop offset="1" stop-color="#f58a3c"/></linearGradient></defs>
<path d="M6 1 H14.500 C12.500 2 12 4 11.300 6.500 L9 15.500 C8.300 18 7.500 19.500 5 19.500 C1.500 19.500 0 17 1 13.500 L3 5 C3.600 2.500 4.500 1 6 1 Z" fill="url(#cp1)"/>
<path d="M18 21 H9.500 C11.500 20 12 18 12.700 15.500 L15 6.500 C15.700 4 16.500 2.500 19 2.500 C22.500 2.500 24 5 23 8.500 L21 17 C20.400 19.500 19.500 21 18 21 Z" fill="url(#cp2)"/>
<path d="M6 1 H14.500 C17 1 18 2 18.500 3 C16.500 3 15.600 4.500 15 6.500 L14 10 C13.500 5 10 3.500 6 1 Z" fill="#2d74dd" opacity=".9"/>
<path d="M18 21 H9.500 C7 21 6 20 5.500 19 C7.500 19 8.400 17.500 9 15.500 L10 12 C10.500 17 14 18.500 18 21 Z" fill="#f0642c" opacity=".9"/></svg>
<svg class="a" style="left:834px;top:864px" width="25" height="24" viewBox="0 0 25 24"><circle cx="19.5" cy="6.5" r="2.7" fill="#7b83eb"/><circle cx="12.5" cy="4.5" r="3.6" fill="#7b83eb"/><path d="M16 9.5 H24 V16 A4 4 0 0 1 16 17 Z" fill="#5059c9"/><path d="M7 9.5 H18.5 V17.5 A5.8 5.8 0 0 1 7 17.5 Z" fill="#7b83eb"/><rect x="1" y="8" width="11.5" height="11.5" rx="1.3" fill="#4b53bc"/><path d="M3.8 11 H9.7 M6.750 11 V17" stroke="#fff" stroke-width="1.5"/></svg>
<svg class="a" style="left:878px;top:864px" width="26" height="24" viewBox="0 0 26 24"><path d="M1 4 A1.5 1.5 0 0 1 2.5 2.5 H9 L11.5 5 H23.5 A1.5 1.5 0 0 1 25 6.5 V9 H1 Z" fill="#e8a317"/><rect x="1" y="6.5" width="24" height="15.5" rx="1.5" fill="#fdd34f"/><rect x="1" y="6.5" width="24" height="5" rx="1.5" fill="#ffe27a"/><path d="M7 22 V18 A1.5 1.5 0 0 1 8.5 16.5 H17.5 A1.5 1.5 0 0 1 19 18 V22 Z" fill="#2f8fe6"/><rect x="9.5" y="19" width="7" height="1.5" fill="#1a6fc2"/></svg>
<div class="a" style="left:888px;top:892px;width:6px;height:3px;background:#8b9098;border-radius:2px"></div>
<svg class="a" style="left:922px;top:858px" width="34" height="32" viewBox="0 0 34 32"><circle cx="13" cy="18.5" r="11.5" fill="#1d8fe0" stroke="#fff" stroke-width="1.3"/><path d="M8.7 15 C8.7 9.5 17.5 9.5 17.5 14.8 C17.5 18 13.2 17.8 13.2 21.5" fill="none" stroke="#fff" stroke-width="2.6"/><circle cx="13.2" cy="25.3" r="1.7" fill="#fff"/><circle cx="22" cy="8.5" r="8" fill="#fdc010"/></svg>
<svg class="a" style="left:966px;top:864px" width="26" height="24" viewBox="0 0 26 24"><path d="M8 8 L17 1 L25 8 V20 A2 2 0 0 1 23 22 H8 Z" fill="#1a73d6"/><path d="M9.5 7.5 L17 2.5 L24 7.5 L17 13 Z" fill="#5fb2f5"/><path d="M8 22 L25 9 V20 A2 2 0 0 1 23 22 Z" fill="#3aa0f3"/><path d="M8 10 L25 22 H8 Z" fill="#1467c8" opacity=".850"/><rect x="1" y="9.5" width="12" height="12" rx="1.5" fill="#0f5fbe"/><ellipse cx="7" cy="15.5" rx="2.8" ry="3.3" fill="none" stroke="#fff" stroke-width="1.5"/></svg>
<svg class="a" style="left:1010px;top:863px" width="28" height="27" viewBox="0 0 28 27"><path d="M12 1.5 C4 1.5 0 8 1.5 14 C3 20 8 23 11.5 22 C14.5 21 12 18 14.5 16.5 C17 15 19 18 22 16 C26 13 24 1.5 12 1.5 Z" fill="#2d9ad6"/><circle cx="8" cy="8" r="2.2" fill="#f2c31a"/><circle cx="13.5" cy="5.5" r="2.2" fill="#e8472f"/><circle cx="6" cy="14" r="2.2" fill="#47b553"/><circle cx="13" cy="12.5" r="1.2" fill="#123"/><path d="M21.5 4 L25.5 4 L25 13 H22 Z" fill="#e3b071"/><rect x="22" y="13" width="3" height="12" fill="#8a5a2e"/></svg>
<div class="a" style="left:1020px;top:892px;width:6px;height:3px;background:#8b9098;border-radius:2px"></div>
<div class="a" style="left:1047px;top:856px;width:40px;height:40px;background:#2a3445;border-radius:4px;box-shadow:inset 0 0 0 1px #353f50"></div>
<svg class="a" style="left:1054px;top:864px" width="26" height="24" viewBox="0 0 26 24"><rect x="6" y="0.5" width="19" height="23" rx="2" fill="#21a366"/><rect x="6" y="0.5" width="9.5" height="7.5" fill="#5fcf6c"/><rect x="15.5" y="0.5" width="9.5" height="7.5" rx="1.5" fill="#b1e86c"/><rect x="6" y="8" width="9.5" height="7.5" fill="#1f8c4e"/><rect x="15.5" y="8" width="9.5" height="7.5" fill="#21793a"/><rect x="6" y="15.5" width="19" height="8" rx="1.5" fill="#185c37"/><rect x="1" y="6.5" width="12.5" height="12.5" rx="1.5" fill="#107c41"/><path d="M4.7 9.5 L9.8 16 M9.8 9.5 L4.7 16" stroke="#fff" stroke-width="1.8"/></svg>
<div class="a" style="left:1059px;top:892px;width:16px;height:3px;background:#9fdcf3;border-radius:2px"></div>
<svg class="a" style="left:1099px;top:864px" width="24" height="24" viewBox="0 0 24 24"><circle cx="12" cy="12" r="11.5" fill="#fff"/><path d="M12 0.5 A11.5 11.5 0 0 1 21.960 6.250 L12 6.250 A5.750 5.750 0 0 0 7.020 9.125 L2.040 6.250 A11.5 11.5 0 0 1 12 0.500Z" fill="#ea4335"/><path d="M21.960 6.250 A11.5 11.5 0 0 1 12 23.5 L16.980 14.875 A5.750 5.750 0 0 0 16.980 9.125 L12 6.250Z" fill="#fbbc04"/><path d="M12 23.5 A11.5 11.5 0 0 1 2.040 6.250 L7.020 14.875 A5.750 5.750 0 0 0 12 17.750 L16.980 14.875Z" fill="#34a853"/><circle cx="12" cy="12" r="5.3" fill="#fff"/><circle cx="12" cy="12" r="4.2" fill="#4285f4"/></svg>
<div class="a" style="left:1108px;top:892px;width:6px;height:3px;background:#8b9098;border-radius:2px"></div>
<svg class="a" style="left:1400px;top:872px" width="14" height="9" fill="none" stroke="#fff" stroke-width="1.5"><path d="M1.5 7.5 L7 2 L12.5 7.5"/></svg>
<span class="t" style="left:1432.500px;top:865px;font-size:21px;color:#fff;transform:scaleX(.9);transform-origin:0 0;font-family:'Liberation Sans',sans-serif">A</span>
<svg class="a" style="left:1462px;top:867px" width="19" height="18" fill="none" stroke="#fff" stroke-width="1.2"><path d="M11 2 H1.5 V12.5 H12.5 V9"/><path d="M5 16 H11 M8 12.5 V16"/><rect x="12.5" y="1" width="4" height="6" rx="1"/><path d="M14.5 7 V16"/><path d="M13.5 3.5 H15.5"/></svg>
<svg class="a" style="left:1486px;top:867px" width="19" height="17" fill="none" stroke="#fff" stroke-width="1.2"><path d="M1.5 6 H4.5 L8.5 2.5 V14.5 L4.5 11 H1.5 Z"/><path d="M11 6 C12.2 7.5 12.2 9.5 11 11 M13.3 4 C15.3 6.5 15.3 10.5 13.3 13 M15.6 2 C18.6 5.5 18.6 11.5 15.6 15"/></svg>
<span id="t58" class="t" style="left:1553.6px;top:862.5px;font-size:12px;color:#fff;font-weight:normal;transform-origin:0 50%;transform:scaleX(0.8791);">18:23</span>
<span id="t59" class="t" style="left:1520.3px;top:878.5px;font-size:12px;color:#fff;font-weight:normal;transform-origin:0 50%;transform:scaleX(0.9940);">2026/02/23</span>
</body></html>
